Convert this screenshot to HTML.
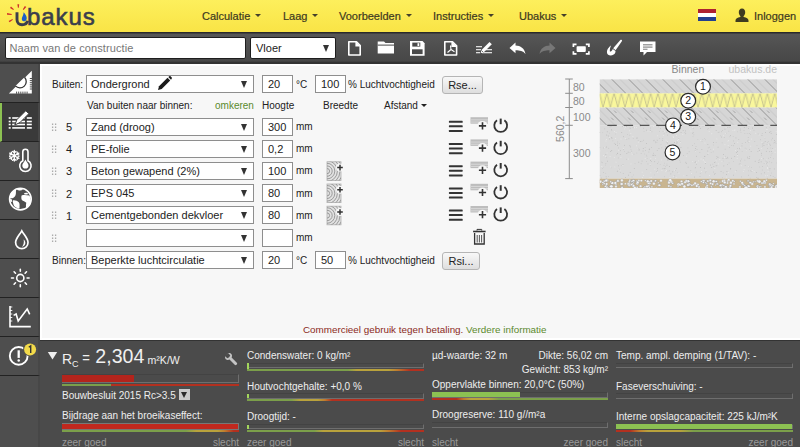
<!DOCTYPE html>
<html><head><meta charset="utf-8">
<style>
*{box-sizing:border-box;margin:0;padding:0}
html,body{width:800px;height:447px;overflow:hidden;font-family:"Liberation Sans",sans-serif;background:#f7f7f7;position:relative}
.a{position:absolute}
#hdr{left:0;top:0;width:800px;height:32px;background:linear-gradient(#fdef5c,#f9e446)}
#tb{left:0;top:32px;width:800px;height:32px;background:linear-gradient(#2a2a2a 0,#2a2a2a 1px,#565656 2px,#4e4e4e 16px,#474747 29px,#333 30.5px,#333 32px)}
#side{left:0;top:64px;width:40px;height:383px;background:#4e4e4e;border-right:2px solid #474747}
.sec{position:absolute;left:0;width:40px;height:39.1px;border-bottom:1.5px solid #222;border-right:2px solid #474747}
#main{left:40px;top:64px;width:760px;height:276px;background:#f7f7f7;border-left:2px solid #fff;border-top:2px solid #fff;border-bottom:2px solid #fff}
#bot{left:40px;top:340px;width:760px;height:107px;background:#4b4b4b;border-top:1px solid #333}
.nav{top:9.5px;font-size:11px;color:#3d3920;line-height:12px;-webkit-text-stroke:0.2px #3d3920}
.car{display:inline-block;width:0;height:0;border-left:3px solid transparent;border-right:3px solid transparent;border-top:3px solid #45402a;vertical-align:middle;margin-left:5px;margin-top:-2px}
.tin{background:#fff;border:1.5px solid #1e1e1e;border-radius:2px}
.sel{position:absolute;background:#fff;border:1px solid #8e8e8e;font-size:11px;color:#222;padding-left:4px;line-height:16px;height:18px;white-space:nowrap}
.num{position:absolute;background:#fff;border:1px solid #8e8e8e;font-size:11px;color:#222;padding-left:5px;line-height:16px;height:18px;width:31px}
.lbl{position:absolute;font-size:10px;color:#222;line-height:12px;white-space:nowrap}
.arr{position:absolute;right:6px;top:5px;width:0;height:0;border-left:3.5px solid transparent;border-right:3.5px solid transparent;border-top:7px solid #333}
.dots{position:absolute;width:5.5px;height:9px;background-image:radial-gradient(circle at 1px 1px,#b8b8b8 0.9px,transparent 1.1px);background-size:3.5px 2.6px}
.wt{position:absolute;font-size:10px;color:#eee;line-height:12px;white-space:nowrap}
.gt{position:absolute;font-size:10px;color:#999;line-height:12px;white-space:nowrap}
.bar{position:absolute;height:5.5px;background:#4b4b4b;border-top:1px solid #434343;border-right:1px solid #6e6e6e;border-bottom:1px solid #6e6e6e}
.strip{position:absolute;height:2px}
.btn{background:linear-gradient(#f8f8f8,#dedede);border:1px solid #b5b5b5;border-radius:3px;font-size:11px;color:#222;text-align:center;line-height:16px}
</style></head><body>
<div id="hdr" class="a"></div>
<!-- logo -->
<svg class="a" style="left:0;top:0" width="40" height="32" viewBox="0 0 40 32">
<g fill="#cf2f2a">
<path d="M17.4 4.3L19.2 4.3L18.8 7.8L17.9 7.8Z"/>
<path d="M10 7.9L11 6.6L13.9 9.3L13.3 10.1Z"/>
<path d="M26.3 7L24.9 6L22.8 9.3L23.6 9.9Z"/>
<path d="M7 13.1L7.1 14.8L11.7 14.9L11.7 14Z"/>
<path d="M8.6 20.9L9.6 22.2L12.9 19.7L12.4 18.9Z"/>
</g>
<path d="M17 12.2V19.5C17 23 19.3 24.8 22 24.8C24.7 24.8 27 23.6 27.5 20.8" fill="none" stroke="#3b3e4c" stroke-width="2.9"/>
<path d="M23.6 12.3C25.5 14.3 27 16.5 26.7 18.8C26.4 21 24.3 21.8 22.9 21.1C21.7 20.4 21.5 18.5 22.4 16.7C23 15.5 23.6 14 23.6 12.3Z" fill="#1d5ec8"/>
</svg>
<div class="a" style="left:27px;top:4.7px;font-size:24px;color:#3b3e4c;line-height:24px;letter-spacing:0.9px;-webkit-text-stroke:0.6px #3b3e4c">bakus</div>
<div class="a nav" style="left:202px">Calculatie<span class="car"></span></div>
<div class="a nav" style="left:283px">Laag<span class="car"></span></div>
<div class="a nav" style="left:339px">Voorbeelden<span class="car"></span></div>
<div class="a nav" style="left:433px">Instructies<span class="car"></span></div>
<div class="a nav" style="left:519px">Ubakus<span class="car"></span></div>
<div class="a" style="left:698px;top:9px;width:18px;height:12px;background:linear-gradient(#ae2230 0,#ae2230 4px,#fff 4px,#fff 8px,#23408f 8px)"></div>
<svg class="a" style="left:735px;top:8px" width="14" height="14" viewBox="0 0 14 14"><path d="M7 0.5C4.8 0.5 3.8 2.3 3.8 4.3C3.8 6 4.6 7.5 5.5 8.2L5.3 9C2.5 9.6 0.5 10.8 0.5 12.5V14H13.5V12.5C13.5 10.8 11.5 9.6 8.7 9L8.5 8.2C9.4 7.5 10.2 6 10.2 4.3C10.2 2.3 9.2 0.5 7 0.5Z" fill="#3f3b20"/></svg>
<div class="a nav" style="left:754px">Inloggen</div>

<div id="tb" class="a"></div>
<div class="a tin" style="left:5px;top:37px;width:241px;height:22px;font-size:11px;color:#777;padding:4px 0 0 3.5px;line-height:13px;letter-spacing:0.1px">Naam van de constructie</div>
<div class="a tin" style="left:250px;top:37px;width:86px;height:22px;font-size:11px;color:#222;padding:4px 0 0 5px;line-height:13px">Vloer<span class="arr" style="top:7px;right:6px"></span></div>
<svg class="a" style="left:0;top:32px" width="800" height="32" viewBox="0 32 800 32">
<!-- file -->
<path d="M348.8 41.8H356.5L360.2 45.5V55H348.8Z" fill="none" stroke="#fff" stroke-width="1.6" stroke-linejoin="round"/>
<path d="M356 41.8V46H360.2" fill="#fff" stroke="#fff" stroke-width="1.2"/>
<!-- folder -->
<path d="M377.7 41.5H384L385.5 43H394V53.6H377.7Z" fill="#fff"/>
<rect x="377.7" y="44.6" width="16.4" height="1" fill="#4a4a4a"/>
<!-- save -->
<path d="M410 41H422.5L424.6 43.2V55.8H410Z" fill="#fff"/>
<rect x="412.3" y="42.6" width="8" height="4" fill="#4a4a4a"/>
<rect x="417.5" y="43.2" width="1.8" height="2.8" fill="#fff"/>
<rect x="412" y="49.3" width="10.6" height="4.8" fill="#4a4a4a"/>
<!-- pdf -->
<path d="M444.8 41.8H452.5L456.6 45.8V55H444.8Z" fill="none" stroke="#fff" stroke-width="1.6" stroke-linejoin="round"/>
<path d="M452 41.8V46.3H456.6" fill="#fff" stroke="#fff" stroke-width="1.2"/>
<path d="M450.5 45.5L451 49.5L447.5 52.5M451 49.5L454.5 51.8" fill="none" stroke="#fff" stroke-width="1.1"/>
<!-- edit list -->
<g fill="#ddd">
<rect x="476" y="46" width="6" height="1.3"/><rect x="476" y="49" width="5" height="1.3"/><rect x="476" y="52" width="4" height="1.3"/>
<rect x="484.5" y="49" width="7.5" height="1.3"/><rect x="482" y="52" width="10" height="1.3"/>
</g>
<path d="M481.5 50L489.5 42L491.8 44.3L483.8 52.3L480.6 53.2Z" fill="#fff"/>
<path d="M481.5 50.5L483.3 52.3" stroke="#4a4a4a" stroke-width="0.8"/>
<!-- undo -->
<path d="M509.5 48L515.5 42.6V45.6C520.5 45.6 524.5 48.5 525.5 54C523 51 520 50.3 515.5 50.3V53.3Z" fill="#fff"/>
<!-- redo -->
<path d="M555.5 48L549.5 42.6V45.6C544.5 45.6 540.5 48.5 539.5 54C542 51 545 50.3 549.5 50.3V53.3Z" fill="#777"/>
<!-- fullscreen -->
<g fill="none" stroke="#fff" stroke-width="1.7">
<path d="M573.4 47V44.3H576.5"/><path d="M585.8 44.3H588.9V47"/><path d="M573.4 51.2V53.9H576.5"/><path d="M585.8 53.9H588.9V51.2"/>
</g>
<rect x="576.6" y="46.3" width="9.2" height="5.6" rx="0.8" fill="#fff"/>
<!-- brush -->
<path d="M620.6 39.8C621.3 39.3 622.4 40.2 622 41L615.6 50.2L613.2 48.3Z" fill="#fff"/>
<path d="M611.2 45.6C608.8 47 606.6 50 607 52.8C607.4 55.6 611 56.2 613.6 54.6C615 53.6 615.6 52.2 615.5 50.9L612.8 48.9C612.3 50.3 611.4 51.4 609.9 51.6C609.6 49.6 610.2 47.3 611.2 45.6Z" fill="#fff"/>
<!-- comment -->
<path d="M640 41.5H655.5V52H647L643.5 55.5V52H640Z" fill="#fff"/>
<rect x="643" y="44.2" width="9.5" height="1.2" fill="#888"/><rect x="643" y="46.5" width="9.5" height="1.2" fill="#888"/><rect x="643" y="48.7" width="4.5" height="1.1" fill="#888"/>
</svg>
<div id="side" class="a"></div>
<div class="sec" style="top:63.5px"></div>
<div class="sec" style="top:102.6px;background:#3a3a3a;border-left:2px solid #8cc152"></div>
<div class="sec" style="top:141.7px"></div>
<div class="sec" style="top:180.8px"></div>
<div class="sec" style="top:219.9px"></div>
<div class="sec" style="top:259.0px"></div>
<div class="sec" style="top:298.1px"></div>
<div class="sec" style="top:337.2px"></div>
<svg class="a" style="left:0;top:64px" width="40" height="383" viewBox="0 64 40 383">
<!-- set square -->
<path d="M31.8 70.7V93.6H8.9Z" fill="#fff"/>
<path d="M15.4 85.9A6.1 6.1 0 0 0 24.5 77.2" fill="#fff" stroke="#333" stroke-width="1.3"/>
<g stroke="#4e4e4e" stroke-width="1">
<path d="M16.6 93.8V91.6M18.7 93.8V91.6M20.8 93.8V91.6M22.9 93.8V91.6M25 93.8V91.6M27.1 93.8V91.6"/>
<path d="M32 78.5H29.8M32 80.6H29.8M32 82.7H29.8M32 84.8H29.8M32 86.9H29.8M32 89H29.8"/>
</g>
<!-- edit list -->
<g fill="#fff">
<rect x="8.7" y="117.2" width="2" height="1.6"/><rect x="8.7" y="120.7" width="2" height="1.6"/><rect x="8.7" y="123.7" width="2" height="1.6"/><rect x="8.7" y="127.1" width="2" height="1.6"/>
<rect x="12.2" y="117.2" width="12.8" height="1.6"/><rect x="12.2" y="120.7" width="12.8" height="1.6"/><rect x="12.2" y="123.7" width="12.8" height="1.6"/><rect x="12.2" y="127.1" width="12.8" height="1.6"/>
<rect x="26.8" y="117.2" width="5" height="1.6"/><rect x="26.8" y="120.7" width="5" height="1.6"/><rect x="26.8" y="123.7" width="5" height="1.6"/><rect x="26.8" y="127.1" width="5" height="1.6"/>
</g>
<path d="M14.8 125L17 119.5L25.8 110.7L28.8 113.7L20 122.5Z" fill="#fff" stroke="#3a3a3a" stroke-width="1"/>
<!-- snowflake -->
<path d="M14.30 155.80L14.30 150.50M14.30 152.80L15.99 151.39M14.30 152.80L12.61 151.39M14.30 155.80L9.71 153.15M11.70 154.30L11.32 152.13M11.70 154.30L9.63 155.05M14.30 155.80L9.71 158.45M11.70 157.30L9.63 156.55M11.70 157.30L11.32 159.47M14.30 155.80L14.30 161.10M14.30 158.80L12.61 160.21M14.30 158.80L15.99 160.21M14.30 155.80L18.89 158.45M16.90 157.30L17.28 159.47M16.90 157.30L18.97 156.55M14.30 155.80L18.89 153.15M16.90 154.30L18.97 155.05M16.90 154.30L17.28 152.13" stroke="#fff" stroke-width="1.3" stroke-linecap="round" fill="none"/>
<circle cx="14.3" cy="155.8" r="1.6" fill="#fff"/>
<!-- thermometer -->
<path d="M22.8 160.8V151.8A2.6 2.6 0 0 1 28 151.8V160.8A5.7 5.7 0 1 1 22.8 160.8Z" fill="none" stroke="#fff" stroke-width="1.6"/>
<path d="M25.4 159.5C26.5 162 28.5 163.5 28.5 165.5A3.1 3.1 0 0 1 22.3 165.5C22.3 163.5 24.3 162 25.4 159.5Z" fill="#fff"/>
<!-- globe -->
<circle cx="20.4" cy="199.1" r="10.8" fill="none" stroke="#fff" stroke-width="1.6"/>
<g fill="#fff">
<path d="M10.5 193.5C12 191.3 14 190 16.2 189.6C15.6 191.5 16.3 193.2 15.6 195C15 196.8 13.8 197.8 12.5 198.2C11.3 198.2 10 198.5 9.6 198C9.7 196.4 9.9 194.8 10.5 193.5Z"/>
<path d="M9.7 199.5C10.2 199 11 198.8 11.6 199.3C12.2 200 12 201.2 11.6 202.3C11 202 10.2 201 9.7 199.5Z"/>
<path d="M13 200.3C15 200 17.6 200.8 18.8 202.2C20 203.6 19.5 205.8 19.5 208.3C18 208.6 16 208 14.6 206.6C13.4 205 13.2 203.4 12.8 202C12.6 201.3 12.7 200.7 13 200.3Z"/>
<path d="M21.6 195.5C23.5 194.6 26.8 195 29.3 195.6C30.6 197.5 31.2 200.5 30.9 203.2C30 205.6 28.2 207.3 26.2 208.3C25.8 206.2 25.9 204.5 26.3 202.8C25 201.5 23 201 21.9 200C21.2 198.6 21.2 196.8 21.6 195.5Z"/>
<path d="M23.8 193.7C24.6 192.8 26.5 192.6 27.8 193.2C28.3 193.8 27.5 194.5 26.5 194.6C25.5 194.6 24.4 194.4 23.8 193.7Z"/>
<path d="M16.5 189.4C18.5 189 21 189 23 189.6C22 190.3 20.5 190.6 19 190.4C18 190.2 17 189.9 16.5 189.4Z"/>
</g>
<!-- drop -->
<path d="M21.8 230.8C19.5 235 15.6 238.5 15.6 242.4A6.2 6.2 0 0 0 28 242.4C28 238.5 24.1 235 21.8 230.8Z" fill="none" stroke="#fff" stroke-width="1.7"/>
<path d="M23.6 239.6C26.2 241.6 26.2 246 22 246.9C23.6 245 24.3 242.5 23.6 239.6Z" fill="#fff"/>
<!-- sun -->
<circle cx="20.3" cy="278" r="3.6" fill="none" stroke="#fff" stroke-width="1.6"/>
<g stroke="#fff" stroke-width="1.6" stroke-linecap="round">
<path d="M20.3 269.2V271.2M20.3 284.8V286.8M11.5 278H13.5M27.1 278H29.1M14.1 271.8L15.5 273.2M25.1 282.8L26.5 284.2M14.1 284.2L15.5 282.8M25.1 273.2L26.5 271.8"/>
</g>
<!-- chart -->
<g fill="none" stroke="#fff" stroke-width="1.6">
<path d="M10 306V326.6H30.8"/>
<path d="M13.6 315.4L16.1 314L18.2 321.1L27.2 309L29.7 314.3" stroke-linejoin="miter"/>
</g>
<g stroke="#fff" stroke-width="0.9"><path d="M10 307H12.3M10 310.5H12.3M10 314H12.3M10 317.5H12.3M10 321H12.3"/></g>
<!-- alert -->
<circle cx="18.7" cy="355.9" r="8.9" fill="none" stroke="#fff" stroke-width="1.9"/>
<path d="M18.7 350.3V357.9" stroke="#fff" stroke-width="2.3"/>
<circle cx="18.7" cy="360.6" r="1.25" fill="#fff"/>
<circle cx="30.1" cy="349.4" r="7" fill="#4e4e4e"/>
<circle cx="30.1" cy="349.4" r="6" fill="#f2da4a"/>
<path d="M28.8 347.3L30.7 345.9V353" fill="none" stroke="#333" stroke-width="1.4"/>
</svg>
<div id="main" class="a"></div>
<div class="lbl" style="left:52px;top:79px">Buiten:</div>
<div class="sel" style="left:86px;top:75px;width:168px">Ondergrond<span class="arr"></span></div>
<svg class="a" style="left:157px;top:76px" width="16" height="15" viewBox="0 0 16 15"><path d="M1 14L2 10.3L10.5 1.8L13.2 4.5L4.7 13Z" fill="#1a1a1a"/><path d="M11.3 1L12.3 0.3C12.8 0 13.3 0 13.7 0.4L14.6 1.3C15 1.7 15 2.2 14.7 2.7L14 3.7Z" fill="#1a1a1a"/></svg>
<div class="num" style="left:262px;top:75px">20</div>
<div class="lbl" style="left:296px;top:79px">°C</div>
<div class="num" style="left:315px;top:75px">100</div>
<div class="lbl" style="left:348px;top:79px">% Luchtvochtigheid</div>
<div class="a btn" style="left:442px;top:76px;width:41px;height:18px">Rse...</div>

<div class="lbl" style="left:87px;top:100px">Van buiten naar binnen:</div>
<div class="lbl" style="left:215px;top:100px;color:#5b8a2d">omkeren</div>
<div class="lbl" style="left:262px;top:100px">Hoogte</div>
<div class="lbl" style="left:323px;top:100px">Breedte</div>
<div class="lbl" style="left:384px;top:100px">Afstand<span class="car" style="border-top-color:#222;margin-left:3px"></span></div>

<!-- rows -->
<svg class="a" style="left:51px;top:122.5px" width="7" height="10" viewBox="0 0 7 10"><g fill="#a0a0a0"><rect x="0.95" y="0.55" width="1.3" height="1.3"/><rect x="3.95" y="0.55" width="1.3" height="1.3"/><rect x="0.95" y="3.55" width="1.3" height="1.3"/><rect x="3.95" y="3.55" width="1.3" height="1.3"/><rect x="0.95" y="6.55" width="1.3" height="1.3"/><rect x="3.95" y="6.55" width="1.3" height="1.3"/></g></svg>
<div class="lbl" style="left:66px;top:121.0px;font-size:11px">5</div>
<div class="sel" style="left:86px;top:117.5px;width:168px">Zand (droog)<span class="arr"></span></div>
<div class="num" style="left:262px;top:117.5px">300</div><div class="lbl" style="left:296px;top:121.0px">mm</div>
<svg class="a" style="left:51px;top:144.7px" width="7" height="10" viewBox="0 0 7 10"><g fill="#a0a0a0"><rect x="0.95" y="0.55" width="1.3" height="1.3"/><rect x="3.95" y="0.55" width="1.3" height="1.3"/><rect x="0.95" y="3.55" width="1.3" height="1.3"/><rect x="3.95" y="3.55" width="1.3" height="1.3"/><rect x="0.95" y="6.55" width="1.3" height="1.3"/><rect x="3.95" y="6.55" width="1.3" height="1.3"/></g></svg>
<div class="lbl" style="left:66px;top:143.2px;font-size:11px">4</div>
<div class="sel" style="left:86px;top:139.7px;width:168px">PE-folie<span class="arr"></span></div>
<div class="num" style="left:262px;top:139.7px">0,2</div><div class="lbl" style="left:296px;top:143.2px">mm</div>
<svg class="a" style="left:51px;top:166.9px" width="7" height="10" viewBox="0 0 7 10"><g fill="#a0a0a0"><rect x="0.95" y="0.55" width="1.3" height="1.3"/><rect x="3.95" y="0.55" width="1.3" height="1.3"/><rect x="0.95" y="3.55" width="1.3" height="1.3"/><rect x="3.95" y="3.55" width="1.3" height="1.3"/><rect x="0.95" y="6.55" width="1.3" height="1.3"/><rect x="3.95" y="6.55" width="1.3" height="1.3"/></g></svg>
<div class="lbl" style="left:66px;top:165.4px;font-size:11px">3</div>
<div class="sel" style="left:86px;top:161.9px;width:168px">Beton gewapend (2%)<span class="arr"></span></div>
<div class="num" style="left:262px;top:161.9px">100</div><div class="lbl" style="left:296px;top:165.4px">mm</div>
<svg class="a" style="left:51px;top:189.1px" width="7" height="10" viewBox="0 0 7 10"><g fill="#a0a0a0"><rect x="0.95" y="0.55" width="1.3" height="1.3"/><rect x="3.95" y="0.55" width="1.3" height="1.3"/><rect x="0.95" y="3.55" width="1.3" height="1.3"/><rect x="3.95" y="3.55" width="1.3" height="1.3"/><rect x="0.95" y="6.55" width="1.3" height="1.3"/><rect x="3.95" y="6.55" width="1.3" height="1.3"/></g></svg>
<div class="lbl" style="left:66px;top:187.6px;font-size:11px">2</div>
<div class="sel" style="left:86px;top:184.1px;width:168px">EPS 045<span class="arr"></span></div>
<div class="num" style="left:262px;top:184.1px">80</div><div class="lbl" style="left:296px;top:187.6px">mm</div>
<svg class="a" style="left:51px;top:211.3px" width="7" height="10" viewBox="0 0 7 10"><g fill="#a0a0a0"><rect x="0.95" y="0.55" width="1.3" height="1.3"/><rect x="3.95" y="0.55" width="1.3" height="1.3"/><rect x="0.95" y="3.55" width="1.3" height="1.3"/><rect x="3.95" y="3.55" width="1.3" height="1.3"/><rect x="0.95" y="6.55" width="1.3" height="1.3"/><rect x="3.95" y="6.55" width="1.3" height="1.3"/></g></svg>
<div class="lbl" style="left:66px;top:209.8px;font-size:11px">1</div>
<div class="sel" style="left:86px;top:206.3px;width:168px">Cementgebonden dekvloer<span class="arr"></span></div>
<div class="num" style="left:262px;top:206.3px">80</div><div class="lbl" style="left:296px;top:209.8px">mm</div>
<svg class="a" style="left:51px;top:233.5px" width="7" height="10" viewBox="0 0 7 10"><g fill="#a0a0a0"><rect x="0.95" y="0.55" width="1.3" height="1.3"/><rect x="3.95" y="0.55" width="1.3" height="1.3"/><rect x="0.95" y="3.55" width="1.3" height="1.3"/><rect x="3.95" y="3.55" width="1.3" height="1.3"/><rect x="0.95" y="6.55" width="1.3" height="1.3"/><rect x="3.95" y="6.55" width="1.3" height="1.3"/></g></svg>
<div class="sel" style="left:86px;top:228.5px;width:168px"><span class="arr"></span></div>
<div class="num" style="left:262px;top:228.5px"></div><div class="lbl" style="left:296px;top:232.0px">mm</div>
<div class="lbl" style="left:52px;top:254.7px">Binnen:</div>
<div class="sel" style="left:86px;top:250.7px;width:168px">Beperkte luchtcirculatie<span class="arr"></span></div>
<div class="num" style="left:262px;top:250.7px">20</div><div class="lbl" style="left:296px;top:254.7px">°C</div>
<div class="num" style="left:315px;top:250.7px">50</div>
<div class="lbl" style="left:348px;top:254.7px">% Luchtvochtigheid</div>
<div class="a btn" style="left:442px;top:252.2px;width:38px;height:18px">Rsi...</div>
<svg class="a" style="left:0;top:0" width="800" height="340" viewBox="0 0 800 340">
<rect x="448.9" y="120.8" width="13.8" height="2" rx="0.6" fill="#333"/>
<rect x="448.9" y="125.3" width="13.8" height="2" rx="0.6" fill="#333"/>
<rect x="448.9" y="130.0" width="13.8" height="2" rx="0.6" fill="#333"/>
<rect x="470.5" y="117.2" width="17.5" height="6.5" fill="#bdbdbd"/>
<rect x="470.5" y="119.3" width="17.5" height="1.1" fill="#d6d6d6"/>
<rect x="470.5" y="121.5" width="17.5" height="1.1" fill="#d6d6d6"/>
<circle cx="482.5" cy="125.9" r="5" fill="#f7f7f7"/>
<path d="M478.9 125.9H486.1M482.5 122.3V129.5" stroke="#333" stroke-width="1.6"/>
<path d="M497 120.3A6.4 6.4 0 1 0 504.4 120.3" fill="none" stroke="#333" stroke-width="1.8"/>
<path d="M500.7 118.6V124.2" stroke="#333" stroke-width="2"/>
<rect x="448.9" y="143.0" width="13.8" height="2" rx="0.6" fill="#333"/>
<rect x="448.9" y="147.5" width="13.8" height="2" rx="0.6" fill="#333"/>
<rect x="448.9" y="152.2" width="13.8" height="2" rx="0.6" fill="#333"/>
<rect x="470.5" y="139.4" width="17.5" height="6.5" fill="#bdbdbd"/>
<rect x="470.5" y="141.5" width="17.5" height="1.1" fill="#d6d6d6"/>
<rect x="470.5" y="143.7" width="17.5" height="1.1" fill="#d6d6d6"/>
<circle cx="482.5" cy="148.1" r="5" fill="#f7f7f7"/>
<path d="M478.9 148.1H486.1M482.5 144.5V151.7" stroke="#333" stroke-width="1.6"/>
<path d="M497 142.5A6.4 6.4 0 1 0 504.4 142.5" fill="none" stroke="#333" stroke-width="1.8"/>
<path d="M500.7 140.8V146.4" stroke="#333" stroke-width="2"/>
<rect x="448.9" y="165.2" width="13.8" height="2" rx="0.6" fill="#333"/>
<rect x="448.9" y="169.7" width="13.8" height="2" rx="0.6" fill="#333"/>
<rect x="448.9" y="174.4" width="13.8" height="2" rx="0.6" fill="#333"/>
<rect x="470.5" y="161.6" width="17.5" height="6.5" fill="#bdbdbd"/>
<rect x="470.5" y="163.7" width="17.5" height="1.1" fill="#d6d6d6"/>
<rect x="470.5" y="165.9" width="17.5" height="1.1" fill="#d6d6d6"/>
<circle cx="482.5" cy="170.3" r="5" fill="#f7f7f7"/>
<path d="M478.9 170.3H486.1M482.5 166.7V173.9" stroke="#333" stroke-width="1.6"/>
<path d="M497 164.7A6.4 6.4 0 1 0 504.4 164.7" fill="none" stroke="#333" stroke-width="1.8"/>
<path d="M500.7 163.0V168.6" stroke="#333" stroke-width="2"/>
<rect x="448.9" y="187.4" width="13.8" height="2" rx="0.6" fill="#333"/>
<rect x="448.9" y="191.9" width="13.8" height="2" rx="0.6" fill="#333"/>
<rect x="448.9" y="196.6" width="13.8" height="2" rx="0.6" fill="#333"/>
<rect x="470.5" y="183.8" width="17.5" height="6.5" fill="#bdbdbd"/>
<rect x="470.5" y="185.9" width="17.5" height="1.1" fill="#d6d6d6"/>
<rect x="470.5" y="188.1" width="17.5" height="1.1" fill="#d6d6d6"/>
<circle cx="482.5" cy="192.5" r="5" fill="#f7f7f7"/>
<path d="M478.9 192.5H486.1M482.5 188.9V196.1" stroke="#333" stroke-width="1.6"/>
<path d="M497 186.9A6.4 6.4 0 1 0 504.4 186.9" fill="none" stroke="#333" stroke-width="1.8"/>
<path d="M500.7 185.2V190.8" stroke="#333" stroke-width="2"/>
<rect x="448.9" y="209.6" width="13.8" height="2" rx="0.6" fill="#333"/>
<rect x="448.9" y="214.1" width="13.8" height="2" rx="0.6" fill="#333"/>
<rect x="448.9" y="218.8" width="13.8" height="2" rx="0.6" fill="#333"/>
<rect x="470.5" y="206.0" width="17.5" height="6.5" fill="#bdbdbd"/>
<rect x="470.5" y="208.1" width="17.5" height="1.1" fill="#d6d6d6"/>
<rect x="470.5" y="210.3" width="17.5" height="1.1" fill="#d6d6d6"/>
<circle cx="482.5" cy="214.7" r="5" fill="#f7f7f7"/>
<path d="M478.9 214.7H486.1M482.5 211.1V218.3" stroke="#333" stroke-width="1.6"/>
<path d="M497 209.1A6.4 6.4 0 1 0 504.4 209.1" fill="none" stroke="#333" stroke-width="1.8"/>
<path d="M500.7 207.4V213.0" stroke="#333" stroke-width="2"/>
<g transform="translate(327,161.8)">
<clipPath id="c2"><rect x="0" y="0" width="14" height="18.6"/></clipPath>
<rect x="0" y="0" width="14" height="18.6" fill="#e2e2e2" stroke="#b0b0b0" stroke-width="0.8"/>
<g clip-path="url(#c2)" fill="none" stroke="#8e8e8e" stroke-width="0.85">
<circle cx="0" cy="9.3" r="2.6"/>
<circle cx="0" cy="9.3" r="5.2"/>
<circle cx="0" cy="9.3" r="7.8"/>
<circle cx="0" cy="9.3" r="10.4"/>
<circle cx="0" cy="9.3" r="13"/>
<circle cx="0" cy="9.3" r="15.6"/>
</g>
<circle cx="13" cy="5.8" r="4" fill="#f7f7f7"/>
<path d="M10.2 5.8H15.8M13 3V8.6" stroke="#333" stroke-width="1.5"/>
</g>
<g transform="translate(327,184.0)">
<clipPath id="c3"><rect x="0" y="0" width="14" height="18.6"/></clipPath>
<rect x="0" y="0" width="14" height="18.6" fill="#e2e2e2" stroke="#b0b0b0" stroke-width="0.8"/>
<g clip-path="url(#c3)" fill="none" stroke="#8e8e8e" stroke-width="0.85">
<circle cx="0" cy="9.3" r="2.6"/>
<circle cx="0" cy="9.3" r="5.2"/>
<circle cx="0" cy="9.3" r="7.8"/>
<circle cx="0" cy="9.3" r="10.4"/>
<circle cx="0" cy="9.3" r="13"/>
<circle cx="0" cy="9.3" r="15.6"/>
</g>
<circle cx="13" cy="5.8" r="4" fill="#f7f7f7"/>
<path d="M10.2 5.8H15.8M13 3V8.6" stroke="#333" stroke-width="1.5"/>
</g>
<g transform="translate(327,206.2)">
<clipPath id="c4"><rect x="0" y="0" width="14" height="18.6"/></clipPath>
<rect x="0" y="0" width="14" height="18.6" fill="#e2e2e2" stroke="#b0b0b0" stroke-width="0.8"/>
<g clip-path="url(#c4)" fill="none" stroke="#8e8e8e" stroke-width="0.85">
<circle cx="0" cy="9.3" r="2.6"/>
<circle cx="0" cy="9.3" r="5.2"/>
<circle cx="0" cy="9.3" r="7.8"/>
<circle cx="0" cy="9.3" r="10.4"/>
<circle cx="0" cy="9.3" r="13"/>
<circle cx="0" cy="9.3" r="15.6"/>
</g>
<circle cx="13" cy="5.8" r="4" fill="#f7f7f7"/>
<path d="M10.2 5.8H15.8M13 3V8.6" stroke="#333" stroke-width="1.5"/>
</g>
<path d="M473.1 231.5H485.6" stroke="#333" stroke-width="1.6"/>
<path d="M477 230.5V229.4H481.7V230.5" fill="none" stroke="#333" stroke-width="1"/>
<path d="M474.6 233.1V244.0H484.2V233.1" fill="none" stroke="#333" stroke-width="1.3"/>
<path d="M477.2 235.0V242.5M479.4 235.0V242.5M481.6 235.0V242.5" stroke="#444" stroke-width="0.9"/>
</svg>
<div class="a" style="left:303px;top:323.5px;font-size:9.85px;color:#8b2a22;line-height:12px;white-space:nowrap">Commercieel gebruik tegen betaling. <span style="color:#5b8a2d">Verdere informatie</span></div>
<svg class="a" style="left:540px;top:60px" width="250" height="135" viewBox="540 60 250 135">
<defs>
<pattern id="h1" patternUnits="userSpaceOnUse" width="17" height="17" x="600" y="79" patternTransform="skewX(45)">
<rect x="0" y="0" width="0.9" height="17" fill="#8c8c8c"/><rect x="8.5" y="0" width="0.7" height="17" fill="#c0c0c0"/>
</pattern>
<pattern id="zz" patternUnits="userSpaceOnUse" width="7.3" height="14.2" x="599.5" y="93.3">
<path d="M0 0L3.65 14.2L7.3 0" fill="none" stroke="#bdb98c" stroke-width="0.8"/><path d="M1.2 0L3.65 10L6.1 0" fill="none" stroke="#e6e39a" stroke-width="0.6"/>
</pattern>
<pattern id="h3" patternUnits="userSpaceOnUse" width="17" height="17.8" x="600" y="107.6" patternTransform="skewX(45)">
<rect x="0" y="0" width="0.9" height="17.8" fill="#8c8c8c"/><rect x="8.5" y="0" width="0.7" height="17.8" fill="#c0c0c0"/><rect x="5" y="3" width="0.8" height="2.5" fill="#9a9a9a"/><rect x="12" y="10" width="0.8" height="2.5" fill="#9a9a9a"/>
</pattern>
<clipPath id="dclip"><rect x="599.5" y="79.2" width="177.5" height="108.8"/></clipPath>
</defs>
<g clip-path="url(#dclip)">
<rect x="599.5" y="79.2" width="177.5" height="14.2" fill="#d6d6d6"/>
<rect x="599.5" y="79.2" width="177.5" height="14.2" fill="url(#h1)"/>
<rect x="599.5" y="93.4" width="177.5" height="14.2" fill="#f9f79c"/>
<rect x="599.5" y="93.4" width="177.5" height="14.2" fill="url(#zz)"/>
<rect x="599.5" y="107.6" width="177.5" height="17.8" fill="#d6d6d6"/>
<rect x="599.5" y="107.6" width="177.5" height="17.8" fill="url(#h3)"/>
<rect x="599.5" y="125.4" width="177.5" height="53" fill="#dadada"/>
<rect x="710.1" y="164.7" width="0.7" height="0.7" fill="#b0b0b0"/>
<rect x="748.7" y="166.5" width="0.7" height="0.7" fill="#bcbcbc"/>
<rect x="714.7" y="173.1" width="0.7" height="0.7" fill="#b0b0b0"/>
<rect x="665.5" y="171.4" width="0.7" height="0.7" fill="#f0f0f0"/>
<rect x="696.0" y="155.9" width="0.7" height="0.7" fill="#b0b0b0"/>
<rect x="729.3" y="147.2" width="0.7" height="0.7" fill="#bcbcbc"/>
<rect x="762.2" y="166.0" width="0.7" height="0.7" fill="#bcbcbc"/>
<rect x="734.7" y="129.6" width="0.7" height="0.7" fill="#f0f0f0"/>
<rect x="622.0" y="125.9" width="0.7" height="0.7" fill="#b0b0b0"/>
<rect x="636.7" y="137.1" width="0.7" height="0.7" fill="#bcbcbc"/>
<rect x="754.4" y="141.0" width="0.7" height="0.7" fill="#bcbcbc"/>
<rect x="695.2" y="161.4" width="0.7" height="0.7" fill="#bcbcbc"/>
<rect x="631.7" y="176.6" width="0.7" height="0.7" fill="#bcbcbc"/>
<rect x="771.1" y="172.7" width="0.7" height="0.7" fill="#c4c4c4"/>
<rect x="603.3" y="147.6" width="0.7" height="0.7" fill="#bcbcbc"/>
<rect x="646.3" y="143.2" width="0.7" height="0.7" fill="#b0b0b0"/>
<rect x="705.3" y="163.0" width="0.7" height="0.7" fill="#b0b0b0"/>
<rect x="654.5" y="168.8" width="0.7" height="0.7" fill="#f0f0f0"/>
<rect x="723.1" y="135.5" width="0.7" height="0.7" fill="#f0f0f0"/>
<rect x="724.6" y="128.8" width="0.7" height="0.7" fill="#b0b0b0"/>
<rect x="768.0" y="144.6" width="0.7" height="0.7" fill="#f0f0f0"/>
<rect x="602.7" y="167.2" width="0.7" height="0.7" fill="#c4c4c4"/>
<rect x="666.3" y="170.0" width="0.7" height="0.7" fill="#f0f0f0"/>
<rect x="607.8" y="135.3" width="0.7" height="0.7" fill="#bcbcbc"/>
<rect x="620.6" y="138.7" width="0.7" height="0.7" fill="#f0f0f0"/>
<rect x="660.6" y="144.4" width="0.7" height="0.7" fill="#c4c4c4"/>
<rect x="737.2" y="131.5" width="0.7" height="0.7" fill="#c4c4c4"/>
<rect x="752.1" y="127.7" width="0.7" height="0.7" fill="#b0b0b0"/>
<rect x="636.5" y="152.7" width="0.7" height="0.7" fill="#c4c4c4"/>
<rect x="762.5" y="143.6" width="0.7" height="0.7" fill="#b0b0b0"/>
<rect x="655.0" y="142.4" width="0.7" height="0.7" fill="#bcbcbc"/>
<rect x="741.3" y="158.7" width="0.7" height="0.7" fill="#c4c4c4"/>
<rect x="776.4" y="134.3" width="0.7" height="0.7" fill="#b0b0b0"/>
<rect x="613.9" y="157.3" width="0.7" height="0.7" fill="#f0f0f0"/>
<rect x="605.1" y="164.7" width="0.7" height="0.7" fill="#c4c4c4"/>
<rect x="746.2" y="149.7" width="0.7" height="0.7" fill="#f0f0f0"/>
<rect x="625.3" y="177.2" width="0.7" height="0.7" fill="#b0b0b0"/>
<rect x="741.8" y="143.3" width="0.7" height="0.7" fill="#bcbcbc"/>
<rect x="622.7" y="164.2" width="0.7" height="0.7" fill="#bcbcbc"/>
<rect x="711.4" y="167.2" width="0.7" height="0.7" fill="#b0b0b0"/>
<rect x="629.5" y="145.4" width="0.7" height="0.7" fill="#b0b0b0"/>
<rect x="749.4" y="141.3" width="0.7" height="0.7" fill="#f0f0f0"/>
<rect x="763.2" y="158.4" width="0.7" height="0.7" fill="#bcbcbc"/>
<rect x="772.7" y="149.6" width="0.7" height="0.7" fill="#f0f0f0"/>
<rect x="721.8" y="142.5" width="0.7" height="0.7" fill="#c4c4c4"/>
<rect x="651.2" y="147.0" width="0.7" height="0.7" fill="#bcbcbc"/>
<rect x="619.5" y="169.0" width="0.7" height="0.7" fill="#bcbcbc"/>
<rect x="710.8" y="152.0" width="0.7" height="0.7" fill="#c4c4c4"/>
<rect x="631.5" y="151.6" width="0.7" height="0.7" fill="#c4c4c4"/>
<rect x="610.7" y="167.5" width="0.7" height="0.7" fill="#c4c4c4"/>
<rect x="722.8" y="160.7" width="0.7" height="0.7" fill="#c4c4c4"/>
<rect x="664.0" y="162.8" width="0.7" height="0.7" fill="#c4c4c4"/>
<rect x="747.8" y="139.7" width="0.7" height="0.7" fill="#c4c4c4"/>
<rect x="769.3" y="143.7" width="0.7" height="0.7" fill="#bcbcbc"/>
<rect x="702.6" y="126.4" width="0.7" height="0.7" fill="#c4c4c4"/>
<rect x="657.3" y="140.2" width="0.7" height="0.7" fill="#c4c4c4"/>
<rect x="744.5" y="159.8" width="0.7" height="0.7" fill="#c4c4c4"/>
<rect x="661.2" y="159.6" width="0.7" height="0.7" fill="#f0f0f0"/>
<rect x="661.6" y="170.1" width="0.7" height="0.7" fill="#f0f0f0"/>
<rect x="772.8" y="176.0" width="0.7" height="0.7" fill="#bcbcbc"/>
<rect x="693.5" y="134.5" width="0.7" height="0.7" fill="#c4c4c4"/>
<rect x="765.9" y="150.9" width="0.7" height="0.7" fill="#b0b0b0"/>
<rect x="727.2" y="164.1" width="0.7" height="0.7" fill="#bcbcbc"/>
<rect x="709.0" y="175.0" width="0.7" height="0.7" fill="#f0f0f0"/>
<rect x="653.2" y="154.8" width="0.7" height="0.7" fill="#c4c4c4"/>
<rect x="727.4" y="127.3" width="0.7" height="0.7" fill="#bcbcbc"/>
<rect x="703.6" y="158.6" width="0.7" height="0.7" fill="#bcbcbc"/>
<rect x="638.4" y="161.8" width="0.7" height="0.7" fill="#b0b0b0"/>
<rect x="774.6" y="177.2" width="0.7" height="0.7" fill="#bcbcbc"/>
<rect x="609.1" y="132.8" width="0.7" height="0.7" fill="#c4c4c4"/>
<rect x="771.3" y="151.1" width="0.7" height="0.7" fill="#b0b0b0"/>
<rect x="673.2" y="144.2" width="0.7" height="0.7" fill="#b0b0b0"/>
<rect x="704.3" y="138.3" width="0.7" height="0.7" fill="#c4c4c4"/>
<rect x="599.6" y="147.1" width="0.7" height="0.7" fill="#c4c4c4"/>
<rect x="751.4" y="171.3" width="0.7" height="0.7" fill="#c4c4c4"/>
<rect x="770.7" y="154.7" width="0.7" height="0.7" fill="#c4c4c4"/>
<rect x="616.3" y="154.4" width="0.7" height="0.7" fill="#c4c4c4"/>
<rect x="768.3" y="141.2" width="0.7" height="0.7" fill="#c4c4c4"/>
<rect x="744.8" y="147.8" width="0.7" height="0.7" fill="#c4c4c4"/>
<rect x="682.5" y="134.0" width="0.7" height="0.7" fill="#f0f0f0"/>
<rect x="699.6" y="176.1" width="0.7" height="0.7" fill="#bcbcbc"/>
<rect x="707.5" y="144.2" width="0.7" height="0.7" fill="#b0b0b0"/>
<rect x="667.3" y="142.9" width="0.7" height="0.7" fill="#bcbcbc"/>
<rect x="657.3" y="171.8" width="0.7" height="0.7" fill="#f0f0f0"/>
<rect x="675.7" y="177.1" width="0.7" height="0.7" fill="#f0f0f0"/>
<rect x="651.2" y="176.9" width="0.7" height="0.7" fill="#f0f0f0"/>
<rect x="667.6" y="170.7" width="0.7" height="0.7" fill="#bcbcbc"/>
<rect x="705.3" y="139.4" width="0.7" height="0.7" fill="#c4c4c4"/>
<rect x="687.6" y="147.6" width="0.7" height="0.7" fill="#c4c4c4"/>
<rect x="767.3" y="141.9" width="0.7" height="0.7" fill="#c4c4c4"/>
<rect x="624.9" y="127.0" width="0.7" height="0.7" fill="#f0f0f0"/>
<rect x="643.1" y="127.9" width="0.7" height="0.7" fill="#bcbcbc"/>
<rect x="746.3" y="126.5" width="0.7" height="0.7" fill="#c4c4c4"/>
<rect x="642.7" y="150.7" width="0.7" height="0.7" fill="#b0b0b0"/>
<rect x="643.1" y="139.9" width="0.7" height="0.7" fill="#bcbcbc"/>
<rect x="727.6" y="140.8" width="0.7" height="0.7" fill="#f0f0f0"/>
<rect x="707.4" y="150.7" width="0.7" height="0.7" fill="#b0b0b0"/>
<rect x="602.4" y="132.4" width="0.7" height="0.7" fill="#c4c4c4"/>
<rect x="694.2" y="143.4" width="0.7" height="0.7" fill="#c4c4c4"/>
<rect x="729.3" y="127.2" width="0.7" height="0.7" fill="#c4c4c4"/>
<rect x="663.6" y="164.9" width="0.7" height="0.7" fill="#bcbcbc"/>
<rect x="606.0" y="139.1" width="0.7" height="0.7" fill="#f0f0f0"/>
<rect x="721.2" y="131.4" width="0.7" height="0.7" fill="#bcbcbc"/>
<rect x="602.1" y="166.7" width="0.7" height="0.7" fill="#f0f0f0"/>
<rect x="705.1" y="162.0" width="0.7" height="0.7" fill="#f0f0f0"/>
<rect x="751.9" y="170.0" width="0.7" height="0.7" fill="#f0f0f0"/>
<rect x="669.1" y="170.5" width="0.7" height="0.7" fill="#bcbcbc"/>
<rect x="759.1" y="150.2" width="0.7" height="0.7" fill="#b0b0b0"/>
<rect x="653.4" y="126.0" width="0.7" height="0.7" fill="#f0f0f0"/>
<rect x="702.8" y="159.8" width="0.7" height="0.7" fill="#f0f0f0"/>
<rect x="761.1" y="133.3" width="0.7" height="0.7" fill="#f0f0f0"/>
<rect x="722.9" y="172.5" width="0.7" height="0.7" fill="#c4c4c4"/>
<rect x="695.0" y="148.1" width="0.7" height="0.7" fill="#b0b0b0"/>
<rect x="611.6" y="137.9" width="0.7" height="0.7" fill="#b0b0b0"/>
<rect x="740.0" y="160.6" width="0.7" height="0.7" fill="#b0b0b0"/>
<rect x="658.6" y="148.3" width="0.7" height="0.7" fill="#b0b0b0"/>
<rect x="776.7" y="162.6" width="0.7" height="0.7" fill="#b0b0b0"/>
<rect x="621.4" y="132.2" width="0.7" height="0.7" fill="#b0b0b0"/>
<rect x="726.0" y="132.9" width="0.7" height="0.7" fill="#c4c4c4"/>
<rect x="724.8" y="148.8" width="0.7" height="0.7" fill="#bcbcbc"/>
<rect x="707.9" y="147.5" width="0.7" height="0.7" fill="#bcbcbc"/>
<rect x="611.4" y="137.0" width="0.7" height="0.7" fill="#b0b0b0"/>
<rect x="716.7" y="164.9" width="0.7" height="0.7" fill="#c4c4c4"/>
<rect x="609.7" y="156.0" width="0.7" height="0.7" fill="#f0f0f0"/>
<rect x="755.4" y="132.9" width="0.7" height="0.7" fill="#f0f0f0"/>
<rect x="615.7" y="161.8" width="0.7" height="0.7" fill="#f0f0f0"/>
<rect x="686.4" y="175.1" width="0.7" height="0.7" fill="#c4c4c4"/>
<rect x="761.9" y="133.1" width="0.7" height="0.7" fill="#c4c4c4"/>
<rect x="626.3" y="158.9" width="0.7" height="0.7" fill="#c4c4c4"/>
<rect x="761.1" y="154.9" width="0.7" height="0.7" fill="#bcbcbc"/>
<rect x="646.2" y="154.8" width="0.7" height="0.7" fill="#c4c4c4"/>
<rect x="747.3" y="140.7" width="0.7" height="0.7" fill="#bcbcbc"/>
<rect x="742.9" y="171.1" width="0.7" height="0.7" fill="#f0f0f0"/>
<rect x="730.3" y="135.2" width="0.7" height="0.7" fill="#b0b0b0"/>
<rect x="715.8" y="130.3" width="0.7" height="0.7" fill="#b0b0b0"/>
<rect x="615.7" y="132.4" width="0.7" height="0.7" fill="#f0f0f0"/>
<rect x="641.8" y="171.8" width="0.7" height="0.7" fill="#f0f0f0"/>
<rect x="770.5" y="131.4" width="0.7" height="0.7" fill="#b0b0b0"/>
<rect x="695.7" y="146.0" width="0.7" height="0.7" fill="#bcbcbc"/>
<rect x="767.2" y="148.3" width="0.7" height="0.7" fill="#bcbcbc"/>
<rect x="732.6" y="130.2" width="0.7" height="0.7" fill="#f0f0f0"/>
<rect x="745.2" y="133.1" width="0.7" height="0.7" fill="#f0f0f0"/>
<rect x="662.4" y="138.1" width="0.7" height="0.7" fill="#c4c4c4"/>
<rect x="764.7" y="162.8" width="0.7" height="0.7" fill="#f0f0f0"/>
<rect x="666.6" y="163.7" width="0.7" height="0.7" fill="#c4c4c4"/>
<rect x="714.5" y="168.0" width="0.7" height="0.7" fill="#f0f0f0"/>
<rect x="770.1" y="144.8" width="0.7" height="0.7" fill="#b0b0b0"/>
<rect x="704.7" y="155.9" width="0.7" height="0.7" fill="#bcbcbc"/>
<rect x="669.7" y="130.9" width="0.7" height="0.7" fill="#b0b0b0"/>
<rect x="632.6" y="136.1" width="0.7" height="0.7" fill="#f0f0f0"/>
<rect x="757.3" y="151.1" width="0.7" height="0.7" fill="#c4c4c4"/>
<rect x="599.6" y="150.5" width="0.7" height="0.7" fill="#f0f0f0"/>
<rect x="656.9" y="150.0" width="0.7" height="0.7" fill="#bcbcbc"/>
<rect x="627.0" y="134.1" width="0.7" height="0.7" fill="#c4c4c4"/>
<rect x="753.8" y="171.4" width="0.7" height="0.7" fill="#f0f0f0"/>
<rect x="626.5" y="139.1" width="0.7" height="0.7" fill="#c4c4c4"/>
<rect x="744.8" y="165.2" width="0.7" height="0.7" fill="#bcbcbc"/>
<rect x="605.4" y="172.9" width="0.7" height="0.7" fill="#c4c4c4"/>
<rect x="763.6" y="145.2" width="0.7" height="0.7" fill="#b0b0b0"/>
<rect x="721.6" y="161.2" width="0.7" height="0.7" fill="#f0f0f0"/>
<rect x="750.2" y="134.0" width="0.7" height="0.7" fill="#c4c4c4"/>
<rect x="651.2" y="161.2" width="0.7" height="0.7" fill="#bcbcbc"/>
<rect x="605.5" y="163.3" width="0.7" height="0.7" fill="#bcbcbc"/>
<rect x="716.0" y="158.2" width="0.7" height="0.7" fill="#c4c4c4"/>
<rect x="720.3" y="135.5" width="0.7" height="0.7" fill="#c4c4c4"/>
<rect x="649.8" y="164.2" width="0.7" height="0.7" fill="#f0f0f0"/>
<rect x="628.5" y="138.4" width="0.7" height="0.7" fill="#bcbcbc"/>
<rect x="766.4" y="159.7" width="0.7" height="0.7" fill="#f0f0f0"/>
<rect x="728.4" y="140.0" width="0.7" height="0.7" fill="#f0f0f0"/>
<rect x="610.3" y="166.7" width="0.7" height="0.7" fill="#f0f0f0"/>
<rect x="629.6" y="127.5" width="0.7" height="0.7" fill="#c4c4c4"/>
<rect x="766.3" y="163.4" width="0.7" height="0.7" fill="#bcbcbc"/>
<rect x="759.0" y="151.6" width="0.7" height="0.7" fill="#f0f0f0"/>
<rect x="609.0" y="138.6" width="0.7" height="0.7" fill="#b0b0b0"/>
<rect x="687.8" y="166.8" width="0.7" height="0.7" fill="#b0b0b0"/>
<rect x="644.8" y="147.2" width="0.7" height="0.7" fill="#c4c4c4"/>
<rect x="713.2" y="171.7" width="0.7" height="0.7" fill="#bcbcbc"/>
<rect x="631.3" y="152.5" width="0.7" height="0.7" fill="#f0f0f0"/>
<rect x="632.9" y="138.1" width="0.7" height="0.7" fill="#c4c4c4"/>
<rect x="739.9" y="130.4" width="0.7" height="0.7" fill="#bcbcbc"/>
<rect x="705.7" y="170.8" width="0.7" height="0.7" fill="#bcbcbc"/>
<rect x="710.4" y="149.0" width="0.7" height="0.7" fill="#c4c4c4"/>
<rect x="685.9" y="155.8" width="0.7" height="0.7" fill="#f0f0f0"/>
<rect x="692.2" y="132.8" width="0.7" height="0.7" fill="#b0b0b0"/>
<rect x="761.6" y="141.9" width="0.7" height="0.7" fill="#f0f0f0"/>
<rect x="757.7" y="178.3" width="0.7" height="0.7" fill="#b0b0b0"/>
<rect x="624.1" y="151.2" width="0.7" height="0.7" fill="#c4c4c4"/>
<rect x="745.0" y="142.2" width="0.7" height="0.7" fill="#bcbcbc"/>
<rect x="694.8" y="150.6" width="0.7" height="0.7" fill="#b0b0b0"/>
<rect x="741.3" y="176.6" width="0.7" height="0.7" fill="#bcbcbc"/>
<rect x="648.5" y="151.7" width="0.7" height="0.7" fill="#bcbcbc"/>
<rect x="608.0" y="136.3" width="0.7" height="0.7" fill="#c4c4c4"/>
<rect x="756.2" y="172.3" width="0.7" height="0.7" fill="#b0b0b0"/>
<rect x="674.2" y="142.3" width="0.7" height="0.7" fill="#b0b0b0"/>
<rect x="758.6" y="160.1" width="0.7" height="0.7" fill="#bcbcbc"/>
<rect x="701.5" y="149.0" width="0.7" height="0.7" fill="#b0b0b0"/>
<rect x="728.7" y="162.6" width="0.7" height="0.7" fill="#c4c4c4"/>
<rect x="618.4" y="168.1" width="0.7" height="0.7" fill="#bcbcbc"/>
<rect x="656.5" y="141.9" width="0.7" height="0.7" fill="#bcbcbc"/>
<rect x="646.1" y="161.3" width="0.7" height="0.7" fill="#c4c4c4"/>
<rect x="605.5" y="154.3" width="0.7" height="0.7" fill="#b0b0b0"/>
<rect x="604.4" y="128.5" width="0.7" height="0.7" fill="#bcbcbc"/>
<rect x="746.2" y="148.7" width="0.7" height="0.7" fill="#c4c4c4"/>
<rect x="768.0" y="157.9" width="0.7" height="0.7" fill="#bcbcbc"/>
<rect x="693.1" y="132.4" width="0.7" height="0.7" fill="#bcbcbc"/>
<rect x="658.1" y="126.5" width="0.7" height="0.7" fill="#bcbcbc"/>
<rect x="728.5" y="130.8" width="0.7" height="0.7" fill="#bcbcbc"/>
<rect x="711.4" y="133.4" width="0.7" height="0.7" fill="#f0f0f0"/>
<rect x="740.6" y="132.0" width="0.7" height="0.7" fill="#c4c4c4"/>
<rect x="678.6" y="137.8" width="0.7" height="0.7" fill="#f0f0f0"/>
<rect x="629.9" y="128.3" width="0.7" height="0.7" fill="#bcbcbc"/>
<rect x="694.0" y="176.7" width="0.7" height="0.7" fill="#b0b0b0"/>
<rect x="617.9" y="168.5" width="0.7" height="0.7" fill="#f0f0f0"/>
<rect x="721.2" y="136.7" width="0.7" height="0.7" fill="#b0b0b0"/>
<rect x="605.3" y="156.1" width="0.7" height="0.7" fill="#f0f0f0"/>
<rect x="724.6" y="144.4" width="0.7" height="0.7" fill="#f0f0f0"/>
<rect x="637.8" y="140.3" width="0.7" height="0.7" fill="#bcbcbc"/>
<rect x="653.3" y="152.9" width="0.7" height="0.7" fill="#bcbcbc"/>
<rect x="664.6" y="168.3" width="0.7" height="0.7" fill="#b0b0b0"/>
<rect x="709.2" y="146.8" width="0.7" height="0.7" fill="#bcbcbc"/>
<rect x="624.9" y="138.3" width="0.7" height="0.7" fill="#f0f0f0"/>
<rect x="606.2" y="134.7" width="0.7" height="0.7" fill="#b0b0b0"/>
<rect x="733.3" y="140.6" width="0.7" height="0.7" fill="#bcbcbc"/>
<rect x="740.9" y="165.4" width="0.7" height="0.7" fill="#f0f0f0"/>
<rect x="720.7" y="171.1" width="0.7" height="0.7" fill="#b0b0b0"/>
<rect x="741.6" y="145.6" width="0.7" height="0.7" fill="#b0b0b0"/>
<rect x="617.9" y="157.6" width="0.7" height="0.7" fill="#bcbcbc"/>
<rect x="743.9" y="127.0" width="0.7" height="0.7" fill="#b0b0b0"/>
<rect x="707.8" y="152.8" width="0.7" height="0.7" fill="#f0f0f0"/>
<rect x="696.4" y="162.1" width="0.7" height="0.7" fill="#f0f0f0"/>
<rect x="773.9" y="168.6" width="0.7" height="0.7" fill="#b0b0b0"/>
<rect x="694.8" y="167.7" width="0.7" height="0.7" fill="#c4c4c4"/>
<rect x="769.6" y="126.9" width="0.7" height="0.7" fill="#bcbcbc"/>
<rect x="649.9" y="129.9" width="0.7" height="0.7" fill="#b0b0b0"/>
<rect x="736.8" y="157.9" width="0.7" height="0.7" fill="#f0f0f0"/>
<rect x="654.0" y="174.6" width="0.7" height="0.7" fill="#c4c4c4"/>
<rect x="764.4" y="138.1" width="0.7" height="0.7" fill="#b0b0b0"/>
<rect x="733.2" y="161.0" width="0.7" height="0.7" fill="#c4c4c4"/>
<rect x="758.7" y="161.9" width="0.7" height="0.7" fill="#bcbcbc"/>
<rect x="685.2" y="130.6" width="0.7" height="0.7" fill="#b0b0b0"/>
<rect x="641.9" y="177.0" width="0.7" height="0.7" fill="#f0f0f0"/>
<rect x="669.3" y="126.0" width="0.7" height="0.7" fill="#f0f0f0"/>
<rect x="666.6" y="165.2" width="0.7" height="0.7" fill="#bcbcbc"/>
<rect x="761.1" y="158.0" width="0.7" height="0.7" fill="#f0f0f0"/>
<rect x="657.0" y="170.1" width="0.7" height="0.7" fill="#c4c4c4"/>
<rect x="643.7" y="131.1" width="0.7" height="0.7" fill="#c4c4c4"/>
<rect x="653.7" y="139.9" width="0.7" height="0.7" fill="#b0b0b0"/>
<rect x="758.8" y="134.6" width="0.7" height="0.7" fill="#f0f0f0"/>
<rect x="735.6" y="137.6" width="0.7" height="0.7" fill="#b0b0b0"/>
<rect x="700.7" y="158.7" width="0.7" height="0.7" fill="#f0f0f0"/>
<rect x="673.5" y="148.1" width="0.7" height="0.7" fill="#bcbcbc"/>
<rect x="653.2" y="140.5" width="0.7" height="0.7" fill="#c4c4c4"/>
<rect x="632.7" y="127.4" width="0.7" height="0.7" fill="#b0b0b0"/>
<rect x="652.0" y="154.9" width="0.7" height="0.7" fill="#bcbcbc"/>
<rect x="676.5" y="142.9" width="0.7" height="0.7" fill="#b0b0b0"/>
<rect x="714.2" y="162.0" width="0.7" height="0.7" fill="#b0b0b0"/>
<rect x="610.4" y="151.2" width="0.7" height="0.7" fill="#b0b0b0"/>
<rect x="656.0" y="170.4" width="0.7" height="0.7" fill="#f0f0f0"/>
<rect x="764.0" y="137.8" width="0.7" height="0.7" fill="#f0f0f0"/>
<rect x="748.6" y="125.9" width="0.7" height="0.7" fill="#bcbcbc"/>
<rect x="619.3" y="143.4" width="0.7" height="0.7" fill="#c4c4c4"/>
<rect x="708.8" y="131.3" width="0.7" height="0.7" fill="#f0f0f0"/>
<rect x="730.2" y="168.7" width="0.7" height="0.7" fill="#bcbcbc"/>
<rect x="726.1" y="174.3" width="0.7" height="0.7" fill="#b0b0b0"/>
<rect x="664.3" y="168.5" width="0.7" height="0.7" fill="#bcbcbc"/>
<rect x="636.1" y="145.5" width="0.7" height="0.7" fill="#f0f0f0"/>
<rect x="757.6" y="177.7" width="0.7" height="0.7" fill="#b0b0b0"/>
<rect x="643.1" y="175.2" width="0.7" height="0.7" fill="#f0f0f0"/>
<rect x="666.1" y="132.0" width="0.7" height="0.7" fill="#c4c4c4"/>
<rect x="623.1" y="126.0" width="0.7" height="0.7" fill="#f0f0f0"/>
<rect x="770.4" y="175.4" width="0.7" height="0.7" fill="#b0b0b0"/>
<rect x="686.6" y="175.0" width="0.7" height="0.7" fill="#c4c4c4"/>
<rect x="602.3" y="168.3" width="0.7" height="0.7" fill="#c4c4c4"/>
<rect x="732.8" y="136.1" width="0.7" height="0.7" fill="#c4c4c4"/>
<rect x="667.3" y="141.1" width="0.7" height="0.7" fill="#f0f0f0"/>
<rect x="713.5" y="166.0" width="0.7" height="0.7" fill="#b0b0b0"/>
<rect x="701.7" y="141.3" width="0.7" height="0.7" fill="#c4c4c4"/>
<rect x="766.9" y="129.1" width="0.7" height="0.7" fill="#f0f0f0"/>
<rect x="608.4" y="147.9" width="0.7" height="0.7" fill="#bcbcbc"/>
<rect x="647.6" y="163.6" width="0.7" height="0.7" fill="#bcbcbc"/>
<rect x="647.6" y="130.8" width="0.7" height="0.7" fill="#f0f0f0"/>
<rect x="676.3" y="135.2" width="0.7" height="0.7" fill="#f0f0f0"/>
<rect x="751.3" y="138.7" width="0.7" height="0.7" fill="#f0f0f0"/>
<rect x="662.6" y="168.4" width="0.7" height="0.7" fill="#b0b0b0"/>
<rect x="744.7" y="133.2" width="0.7" height="0.7" fill="#b0b0b0"/>
<rect x="603.3" y="155.3" width="0.7" height="0.7" fill="#f0f0f0"/>
<rect x="753.6" y="129.9" width="0.7" height="0.7" fill="#bcbcbc"/>
<rect x="633.9" y="168.0" width="0.7" height="0.7" fill="#b0b0b0"/>
<rect x="683.3" y="130.3" width="0.7" height="0.7" fill="#c4c4c4"/>
<rect x="705.7" y="169.9" width="0.7" height="0.7" fill="#f0f0f0"/>
<rect x="689.6" y="128.6" width="0.7" height="0.7" fill="#f0f0f0"/>
<rect x="736.3" y="152.1" width="0.7" height="0.7" fill="#b0b0b0"/>
<rect x="637.8" y="147.9" width="0.7" height="0.7" fill="#f0f0f0"/>
<rect x="743.7" y="169.0" width="0.7" height="0.7" fill="#f0f0f0"/>
<rect x="762.0" y="145.7" width="0.7" height="0.7" fill="#bcbcbc"/>
<rect x="757.8" y="133.6" width="0.7" height="0.7" fill="#bcbcbc"/>
<rect x="674.4" y="176.8" width="0.7" height="0.7" fill="#c4c4c4"/>
<rect x="638.0" y="147.9" width="0.7" height="0.7" fill="#c4c4c4"/>
<rect x="624.2" y="144.9" width="0.7" height="0.7" fill="#b0b0b0"/>
<rect x="717.8" y="132.3" width="0.7" height="0.7" fill="#bcbcbc"/>
<rect x="734.1" y="129.8" width="0.7" height="0.7" fill="#f0f0f0"/>
<rect x="605.9" y="147.3" width="0.7" height="0.7" fill="#bcbcbc"/>
<rect x="634.4" y="126.8" width="0.7" height="0.7" fill="#f0f0f0"/>
<rect x="770.0" y="157.2" width="0.7" height="0.7" fill="#bcbcbc"/>
<rect x="682.6" y="129.9" width="0.7" height="0.7" fill="#c4c4c4"/>
<rect x="765.9" y="127.4" width="0.7" height="0.7" fill="#bcbcbc"/>
<rect x="743.7" y="130.3" width="0.7" height="0.7" fill="#bcbcbc"/>
<rect x="733.3" y="145.4" width="0.7" height="0.7" fill="#bcbcbc"/>
<rect x="626.5" y="153.0" width="0.7" height="0.7" fill="#b0b0b0"/>
<rect x="649.8" y="131.4" width="0.7" height="0.7" fill="#f0f0f0"/>
<rect x="666.1" y="145.2" width="0.7" height="0.7" fill="#f0f0f0"/>
<rect x="696.7" y="149.1" width="0.7" height="0.7" fill="#bcbcbc"/>
<rect x="770.8" y="133.2" width="0.7" height="0.7" fill="#b0b0b0"/>
<rect x="696.3" y="164.2" width="0.7" height="0.7" fill="#bcbcbc"/>
<rect x="641.7" y="160.7" width="0.7" height="0.7" fill="#b0b0b0"/>
<rect x="600.9" y="166.3" width="0.7" height="0.7" fill="#f0f0f0"/>
<rect x="640.8" y="163.4" width="0.7" height="0.7" fill="#bcbcbc"/>
<rect x="740.2" y="128.7" width="0.7" height="0.7" fill="#bcbcbc"/>
<rect x="606.3" y="146.0" width="0.7" height="0.7" fill="#c4c4c4"/>
<rect x="737.3" y="155.1" width="0.7" height="0.7" fill="#f0f0f0"/>
<rect x="679.4" y="160.2" width="0.7" height="0.7" fill="#c4c4c4"/>
<rect x="700.4" y="140.3" width="0.7" height="0.7" fill="#f0f0f0"/>
<rect x="774.9" y="141.6" width="0.7" height="0.7" fill="#bcbcbc"/>
<rect x="704.4" y="161.6" width="0.7" height="0.7" fill="#f0f0f0"/>
<rect x="609.3" y="136.9" width="0.7" height="0.7" fill="#f0f0f0"/>
<rect x="617.0" y="152.8" width="0.7" height="0.7" fill="#c4c4c4"/>
<rect x="746.8" y="133.0" width="0.7" height="0.7" fill="#c4c4c4"/>
<rect x="610.7" y="126.0" width="0.7" height="0.7" fill="#bcbcbc"/>
<rect x="700.1" y="128.0" width="0.7" height="0.7" fill="#b0b0b0"/>
<rect x="620.2" y="172.3" width="0.7" height="0.7" fill="#c4c4c4"/>
<rect x="771.2" y="139.6" width="0.7" height="0.7" fill="#c4c4c4"/>
<rect x="685.4" y="133.4" width="0.7" height="0.7" fill="#b0b0b0"/>
<rect x="646.0" y="169.3" width="0.7" height="0.7" fill="#c4c4c4"/>
<rect x="668.5" y="158.8" width="0.7" height="0.7" fill="#bcbcbc"/>
<rect x="724.1" y="156.9" width="0.7" height="0.7" fill="#f0f0f0"/>
<rect x="761.9" y="169.7" width="0.7" height="0.7" fill="#bcbcbc"/>
<rect x="699.9" y="173.1" width="0.7" height="0.7" fill="#c4c4c4"/>
<rect x="699.1" y="126.3" width="0.7" height="0.7" fill="#b0b0b0"/>
<rect x="722.6" y="157.9" width="0.7" height="0.7" fill="#b0b0b0"/>
<rect x="604.1" y="147.4" width="0.7" height="0.7" fill="#f0f0f0"/>
<rect x="727.5" y="157.9" width="0.7" height="0.7" fill="#bcbcbc"/>
<rect x="694.7" y="162.3" width="0.7" height="0.7" fill="#b0b0b0"/>
<rect x="727.2" y="156.9" width="0.7" height="0.7" fill="#b0b0b0"/>
<rect x="611.4" y="150.0" width="0.7" height="0.7" fill="#b0b0b0"/>
<rect x="769.3" y="161.5" width="0.7" height="0.7" fill="#c4c4c4"/>
<rect x="620.9" y="165.4" width="0.7" height="0.7" fill="#c4c4c4"/>
<rect x="680.0" y="141.5" width="0.7" height="0.7" fill="#c4c4c4"/>
<rect x="691.0" y="173.2" width="0.7" height="0.7" fill="#f0f0f0"/>
<rect x="667.1" y="160.2" width="0.7" height="0.7" fill="#c4c4c4"/>
<rect x="655.3" y="157.9" width="0.7" height="0.7" fill="#f0f0f0"/>
<rect x="615.2" y="144.3" width="0.7" height="0.7" fill="#b0b0b0"/>
<rect x="713.1" y="148.8" width="0.7" height="0.7" fill="#f0f0f0"/>
<rect x="630.5" y="133.1" width="0.7" height="0.7" fill="#f0f0f0"/>
<rect x="629.6" y="152.2" width="0.7" height="0.7" fill="#c4c4c4"/>
<rect x="761.4" y="133.4" width="0.7" height="0.7" fill="#c4c4c4"/>
<rect x="699.5" y="152.2" width="0.7" height="0.7" fill="#bcbcbc"/>
<rect x="698.1" y="160.6" width="0.7" height="0.7" fill="#f0f0f0"/>
<rect x="697.5" y="139.0" width="0.7" height="0.7" fill="#c4c4c4"/>
<rect x="651.6" y="131.5" width="0.7" height="0.7" fill="#c4c4c4"/>
<rect x="675.0" y="170.2" width="0.7" height="0.7" fill="#c4c4c4"/>
<rect x="685.9" y="163.0" width="0.7" height="0.7" fill="#b0b0b0"/>
<rect x="769.2" y="131.9" width="0.7" height="0.7" fill="#b0b0b0"/>
<rect x="659.2" y="131.2" width="0.7" height="0.7" fill="#c4c4c4"/>
<rect x="749.4" y="156.4" width="0.7" height="0.7" fill="#b0b0b0"/>
<rect x="737.3" y="154.3" width="0.7" height="0.7" fill="#bcbcbc"/>
<rect x="712.4" y="163.8" width="0.7" height="0.7" fill="#c4c4c4"/>
<rect x="617.2" y="170.8" width="0.7" height="0.7" fill="#b0b0b0"/>
<rect x="654.9" y="141.2" width="0.7" height="0.7" fill="#c4c4c4"/>
<rect x="672.4" y="171.5" width="0.7" height="0.7" fill="#b0b0b0"/>
<rect x="611.2" y="129.4" width="0.7" height="0.7" fill="#b0b0b0"/>
<rect x="767.0" y="167.3" width="0.7" height="0.7" fill="#f0f0f0"/>
<rect x="618.0" y="147.6" width="0.7" height="0.7" fill="#bcbcbc"/>
<rect x="674.4" y="175.1" width="0.7" height="0.7" fill="#c4c4c4"/>
<rect x="715.1" y="161.6" width="0.7" height="0.7" fill="#c4c4c4"/>
<rect x="765.1" y="175.5" width="0.7" height="0.7" fill="#f0f0f0"/>
<rect x="667.0" y="134.7" width="0.7" height="0.7" fill="#bcbcbc"/>
<rect x="619.9" y="154.0" width="0.7" height="0.7" fill="#b0b0b0"/>
<rect x="715.7" y="160.6" width="0.7" height="0.7" fill="#f0f0f0"/>
<rect x="677.2" y="140.1" width="0.7" height="0.7" fill="#f0f0f0"/>
<rect x="772.2" y="148.3" width="0.7" height="0.7" fill="#bcbcbc"/>
<rect x="756.0" y="177.3" width="0.7" height="0.7" fill="#bcbcbc"/>
<rect x="667.3" y="159.1" width="0.7" height="0.7" fill="#bcbcbc"/>
<rect x="657.3" y="168.4" width="0.7" height="0.7" fill="#b0b0b0"/>
<rect x="624.3" y="128.6" width="0.7" height="0.7" fill="#f0f0f0"/>
<rect x="653.9" y="154.8" width="0.7" height="0.7" fill="#c4c4c4"/>
<rect x="649.9" y="164.9" width="0.7" height="0.7" fill="#c4c4c4"/>
<rect x="680.6" y="147.0" width="0.7" height="0.7" fill="#b0b0b0"/>
<rect x="623.3" y="136.4" width="0.7" height="0.7" fill="#b0b0b0"/>
<rect x="678.5" y="138.1" width="0.7" height="0.7" fill="#bcbcbc"/>
<rect x="629.3" y="130.5" width="0.7" height="0.7" fill="#f0f0f0"/>
<rect x="645.1" y="150.2" width="0.7" height="0.7" fill="#bcbcbc"/>
<rect x="741.8" y="151.1" width="0.7" height="0.7" fill="#c4c4c4"/>
<rect x="702.5" y="139.0" width="0.7" height="0.7" fill="#c4c4c4"/>
<rect x="723.3" y="154.3" width="0.7" height="0.7" fill="#b0b0b0"/>
<rect x="636.2" y="127.0" width="0.7" height="0.7" fill="#f0f0f0"/>
<rect x="712.9" y="151.5" width="0.7" height="0.7" fill="#c4c4c4"/>
<rect x="707.0" y="128.8" width="0.7" height="0.7" fill="#c4c4c4"/>
<rect x="623.1" y="147.9" width="0.7" height="0.7" fill="#f0f0f0"/>
<rect x="665.3" y="166.4" width="0.7" height="0.7" fill="#c4c4c4"/>
<rect x="715.8" y="165.5" width="0.7" height="0.7" fill="#b0b0b0"/>
<rect x="599.7" y="175.3" width="0.7" height="0.7" fill="#c4c4c4"/>
<rect x="770.5" y="147.7" width="0.7" height="0.7" fill="#c4c4c4"/>
<rect x="674.2" y="169.8" width="0.7" height="0.7" fill="#f0f0f0"/>
<rect x="659.8" y="164.2" width="0.7" height="0.7" fill="#c4c4c4"/>
<rect x="725.8" y="158.1" width="0.7" height="0.7" fill="#b0b0b0"/>
<rect x="627.8" y="151.8" width="0.7" height="0.7" fill="#b0b0b0"/>
<rect x="695.2" y="151.1" width="0.7" height="0.7" fill="#f0f0f0"/>
<rect x="748.1" y="128.1" width="0.7" height="0.7" fill="#b0b0b0"/>
<rect x="684.5" y="132.1" width="0.7" height="0.7" fill="#bcbcbc"/>
<rect x="629.5" y="134.8" width="0.7" height="0.7" fill="#bcbcbc"/>
<rect x="717.7" y="146.8" width="0.7" height="0.7" fill="#b0b0b0"/>
<rect x="667.8" y="159.6" width="0.7" height="0.7" fill="#bcbcbc"/>
<rect x="714.1" y="174.1" width="0.7" height="0.7" fill="#bcbcbc"/>
<rect x="716.1" y="156.3" width="0.7" height="0.7" fill="#c4c4c4"/>
<rect x="676.7" y="141.9" width="0.7" height="0.7" fill="#b0b0b0"/>
<rect x="665.7" y="157.1" width="0.7" height="0.7" fill="#f0f0f0"/>
<rect x="738.8" y="163.9" width="0.7" height="0.7" fill="#c4c4c4"/>
<rect x="693.7" y="125.9" width="0.7" height="0.7" fill="#f0f0f0"/>
<rect x="609.6" y="126.6" width="0.7" height="0.7" fill="#bcbcbc"/>
<rect x="618.4" y="149.9" width="0.7" height="0.7" fill="#f0f0f0"/>
<rect x="759.0" y="150.4" width="0.7" height="0.7" fill="#c4c4c4"/>
<rect x="692.1" y="127.1" width="0.7" height="0.7" fill="#f0f0f0"/>
<rect x="747.7" y="158.0" width="0.7" height="0.7" fill="#bcbcbc"/>
<rect x="603.1" y="172.2" width="0.7" height="0.7" fill="#bcbcbc"/>
<rect x="771.4" y="162.4" width="0.7" height="0.7" fill="#bcbcbc"/>
<rect x="617.3" y="145.2" width="0.7" height="0.7" fill="#b0b0b0"/>
<rect x="630.1" y="146.6" width="0.7" height="0.7" fill="#b0b0b0"/>
<rect x="675.6" y="141.6" width="0.7" height="0.7" fill="#f0f0f0"/>
<rect x="669.0" y="166.3" width="0.7" height="0.7" fill="#b0b0b0"/>
<rect x="758.3" y="162.0" width="0.7" height="0.7" fill="#bcbcbc"/>
<rect x="622.9" y="173.1" width="0.7" height="0.7" fill="#bcbcbc"/>
<rect x="672.0" y="127.2" width="0.7" height="0.7" fill="#f0f0f0"/>
<rect x="692.7" y="136.4" width="0.7" height="0.7" fill="#c4c4c4"/>
<rect x="734.9" y="171.5" width="0.7" height="0.7" fill="#f0f0f0"/>
<rect x="740.3" y="147.6" width="0.7" height="0.7" fill="#f0f0f0"/>
<rect x="729.5" y="136.4" width="0.7" height="0.7" fill="#c4c4c4"/>
<rect x="726.6" y="171.3" width="0.7" height="0.7" fill="#b0b0b0"/>
<rect x="633.6" y="153.8" width="0.7" height="0.7" fill="#bcbcbc"/>
<rect x="664.4" y="130.8" width="0.7" height="0.7" fill="#f0f0f0"/>
<rect x="663.8" y="133.4" width="0.7" height="0.7" fill="#c4c4c4"/>
<rect x="631.8" y="154.4" width="0.7" height="0.7" fill="#f0f0f0"/>
<rect x="767.8" y="164.8" width="0.7" height="0.7" fill="#f0f0f0"/>
<rect x="769.5" y="169.6" width="0.7" height="0.7" fill="#c4c4c4"/>
<rect x="728.4" y="172.3" width="0.7" height="0.7" fill="#f0f0f0"/>
<rect x="626.2" y="126.2" width="0.7" height="0.7" fill="#b0b0b0"/>
<rect x="727.8" y="145.2" width="0.7" height="0.7" fill="#f0f0f0"/>
<rect x="646.5" y="155.8" width="0.7" height="0.7" fill="#c4c4c4"/>
<rect x="707.4" y="154.0" width="0.7" height="0.7" fill="#bcbcbc"/>
<rect x="669.3" y="155.1" width="0.7" height="0.7" fill="#b0b0b0"/>
<rect x="640.3" y="141.3" width="0.7" height="0.7" fill="#b0b0b0"/>
<rect x="737.3" y="151.2" width="0.7" height="0.7" fill="#b0b0b0"/>
<rect x="717.6" y="157.0" width="0.7" height="0.7" fill="#b0b0b0"/>
<rect x="613.9" y="142.9" width="0.7" height="0.7" fill="#bcbcbc"/>
<rect x="656.4" y="170.8" width="0.7" height="0.7" fill="#b0b0b0"/>
<rect x="654.4" y="161.4" width="0.7" height="0.7" fill="#b0b0b0"/>
<rect x="764.0" y="172.5" width="0.7" height="0.7" fill="#b0b0b0"/>
<rect x="606.7" y="152.7" width="0.7" height="0.7" fill="#f0f0f0"/>
<rect x="637.9" y="141.8" width="0.7" height="0.7" fill="#f0f0f0"/>
<rect x="648.9" y="149.4" width="0.7" height="0.7" fill="#b0b0b0"/>
<rect x="771.7" y="152.9" width="0.7" height="0.7" fill="#c4c4c4"/>
<rect x="747.1" y="156.8" width="0.7" height="0.7" fill="#b0b0b0"/>
<rect x="764.8" y="141.1" width="0.7" height="0.7" fill="#b0b0b0"/>
<rect x="627.9" y="158.7" width="0.7" height="0.7" fill="#f0f0f0"/>
<rect x="615.1" y="143.8" width="0.7" height="0.7" fill="#bcbcbc"/>
<rect x="662.7" y="131.3" width="0.7" height="0.7" fill="#c4c4c4"/>
<rect x="616.9" y="171.1" width="0.7" height="0.7" fill="#c4c4c4"/>
<rect x="605.8" y="176.5" width="0.7" height="0.7" fill="#b0b0b0"/>
<rect x="705.1" y="172.5" width="0.7" height="0.7" fill="#c4c4c4"/>
<rect x="646.4" y="169.0" width="0.7" height="0.7" fill="#c4c4c4"/>
<rect x="690.6" y="130.7" width="0.7" height="0.7" fill="#f0f0f0"/>
<rect x="672.8" y="136.1" width="0.7" height="0.7" fill="#f0f0f0"/>
<rect x="765.3" y="132.3" width="0.7" height="0.7" fill="#b0b0b0"/>
<rect x="677.4" y="171.9" width="0.7" height="0.7" fill="#c4c4c4"/>
<rect x="739.1" y="147.9" width="0.7" height="0.7" fill="#b0b0b0"/>
<rect x="630.6" y="149.2" width="0.7" height="0.7" fill="#c4c4c4"/>
<rect x="606.9" y="131.5" width="0.7" height="0.7" fill="#b0b0b0"/>
<rect x="611.5" y="130.1" width="0.7" height="0.7" fill="#c4c4c4"/>
<rect x="650.0" y="160.3" width="0.7" height="0.7" fill="#b0b0b0"/>
<rect x="676.4" y="141.4" width="0.7" height="0.7" fill="#c4c4c4"/>
<rect x="693.2" y="178.1" width="0.7" height="0.7" fill="#f0f0f0"/>
<rect x="748.9" y="158.3" width="0.7" height="0.7" fill="#b0b0b0"/>
<rect x="631.0" y="150.7" width="0.7" height="0.7" fill="#c4c4c4"/>
<rect x="750.3" y="130.4" width="0.7" height="0.7" fill="#f0f0f0"/>
<rect x="756.6" y="145.3" width="0.7" height="0.7" fill="#c4c4c4"/>
<rect x="766.9" y="175.2" width="0.7" height="0.7" fill="#f0f0f0"/>
<rect x="670.8" y="149.4" width="0.7" height="0.7" fill="#c4c4c4"/>
<rect x="622.6" y="165.0" width="0.7" height="0.7" fill="#f0f0f0"/>
<rect x="662.9" y="135.3" width="0.7" height="0.7" fill="#f0f0f0"/>
<rect x="601.2" y="161.7" width="0.7" height="0.7" fill="#c4c4c4"/>
<rect x="644.8" y="158.3" width="0.7" height="0.7" fill="#f0f0f0"/>
<rect x="761.2" y="152.9" width="0.7" height="0.7" fill="#b0b0b0"/>
<rect x="650.3" y="127.7" width="0.7" height="0.7" fill="#bcbcbc"/>
<rect x="716.5" y="138.6" width="0.7" height="0.7" fill="#f0f0f0"/>
<rect x="754.8" y="160.9" width="0.7" height="0.7" fill="#b0b0b0"/>
<rect x="759.4" y="166.7" width="0.7" height="0.7" fill="#c4c4c4"/>
<rect x="617.1" y="143.5" width="0.7" height="0.7" fill="#c4c4c4"/>
<rect x="628.3" y="174.8" width="0.7" height="0.7" fill="#b0b0b0"/>
<rect x="634.3" y="127.5" width="0.7" height="0.7" fill="#f0f0f0"/>
<rect x="692.9" y="128.2" width="0.7" height="0.7" fill="#bcbcbc"/>
<rect x="775.7" y="143.1" width="0.7" height="0.7" fill="#c4c4c4"/>
<rect x="638.7" y="149.7" width="0.7" height="0.7" fill="#b0b0b0"/>
<rect x="723.5" y="165.6" width="0.7" height="0.7" fill="#b0b0b0"/>
<rect x="774.2" y="142.2" width="0.7" height="0.7" fill="#bcbcbc"/>
<rect x="759.1" y="159.1" width="0.7" height="0.7" fill="#c4c4c4"/>
<rect x="738.4" y="139.2" width="0.7" height="0.7" fill="#bcbcbc"/>
<rect x="737.4" y="141.9" width="0.7" height="0.7" fill="#f0f0f0"/>
<rect x="630.6" y="163.6" width="0.7" height="0.7" fill="#f0f0f0"/>
<rect x="748.3" y="166.1" width="0.7" height="0.7" fill="#f0f0f0"/>
<rect x="750.3" y="170.5" width="0.7" height="0.7" fill="#bcbcbc"/>
<rect x="667.5" y="155.9" width="0.7" height="0.7" fill="#c4c4c4"/>
<rect x="685.5" y="161.9" width="0.7" height="0.7" fill="#b0b0b0"/>
<rect x="680.7" y="132.1" width="0.7" height="0.7" fill="#b0b0b0"/>
<rect x="763.6" y="142.6" width="0.7" height="0.7" fill="#bcbcbc"/>
<rect x="769.4" y="151.4" width="0.7" height="0.7" fill="#b0b0b0"/>
<rect x="704.6" y="142.7" width="0.7" height="0.7" fill="#f0f0f0"/>
<rect x="662.2" y="139.9" width="0.7" height="0.7" fill="#bcbcbc"/>
<rect x="751.3" y="167.3" width="0.7" height="0.7" fill="#c4c4c4"/>
<rect x="679.9" y="161.8" width="0.7" height="0.7" fill="#bcbcbc"/>
<rect x="640.0" y="126.1" width="0.7" height="0.7" fill="#c4c4c4"/>
<rect x="615.3" y="138.2" width="0.7" height="0.7" fill="#f0f0f0"/>
<rect x="717.4" y="156.5" width="0.7" height="0.7" fill="#c4c4c4"/>
<rect x="748.9" y="133.1" width="0.7" height="0.7" fill="#bcbcbc"/>
<rect x="620.6" y="156.9" width="0.7" height="0.7" fill="#f0f0f0"/>
<rect x="638.9" y="148.9" width="0.7" height="0.7" fill="#c4c4c4"/>
<rect x="722.1" y="130.0" width="0.7" height="0.7" fill="#bcbcbc"/>
<rect x="704.2" y="167.8" width="0.7" height="0.7" fill="#b0b0b0"/>
<rect x="719.5" y="159.4" width="0.7" height="0.7" fill="#f0f0f0"/>
<rect x="767.2" y="177.9" width="0.7" height="0.7" fill="#b0b0b0"/>
<rect x="653.1" y="155.2" width="0.7" height="0.7" fill="#bcbcbc"/>
<rect x="715.8" y="142.2" width="0.7" height="0.7" fill="#c4c4c4"/>
<rect x="748.3" y="170.5" width="0.7" height="0.7" fill="#c4c4c4"/>
<rect x="623.2" y="149.2" width="0.7" height="0.7" fill="#bcbcbc"/>
<rect x="731.1" y="157.9" width="0.7" height="0.7" fill="#b0b0b0"/>
<rect x="761.6" y="135.3" width="0.7" height="0.7" fill="#b0b0b0"/>
<rect x="634.7" y="163.4" width="0.7" height="0.7" fill="#c4c4c4"/>
<rect x="670.5" y="173.6" width="0.7" height="0.7" fill="#b0b0b0"/>
<rect x="713.1" y="142.2" width="0.7" height="0.7" fill="#b0b0b0"/>
<rect x="710.4" y="126.9" width="0.7" height="0.7" fill="#bcbcbc"/>
<rect x="767.0" y="168.1" width="0.7" height="0.7" fill="#f0f0f0"/>
<rect x="678.0" y="139.3" width="0.7" height="0.7" fill="#f0f0f0"/>
<rect x="669.6" y="177.2" width="0.7" height="0.7" fill="#f0f0f0"/>
<rect x="717.9" y="163.6" width="0.7" height="0.7" fill="#f0f0f0"/>
<rect x="766.1" y="129.0" width="0.7" height="0.7" fill="#f0f0f0"/>
<rect x="708.3" y="128.1" width="0.7" height="0.7" fill="#c4c4c4"/>
<rect x="658.2" y="161.7" width="0.7" height="0.7" fill="#c4c4c4"/>
<rect x="676.1" y="168.2" width="0.7" height="0.7" fill="#bcbcbc"/>
<rect x="763.8" y="163.0" width="0.7" height="0.7" fill="#bcbcbc"/>
<rect x="700.0" y="167.0" width="0.7" height="0.7" fill="#b0b0b0"/>
<rect x="649.7" y="177.3" width="0.7" height="0.7" fill="#f0f0f0"/>
<rect x="686.8" y="153.3" width="0.7" height="0.7" fill="#bcbcbc"/>
<rect x="735.3" y="150.4" width="0.7" height="0.7" fill="#f0f0f0"/>
<rect x="678.1" y="155.5" width="0.7" height="0.7" fill="#bcbcbc"/>
<rect x="657.0" y="163.3" width="0.7" height="0.7" fill="#bcbcbc"/>
<rect x="614.5" y="166.6" width="0.7" height="0.7" fill="#f0f0f0"/>
<rect x="695.3" y="167.3" width="0.7" height="0.7" fill="#bcbcbc"/>
<rect x="601.9" y="162.4" width="0.7" height="0.7" fill="#bcbcbc"/>
<rect x="769.6" y="168.0" width="0.7" height="0.7" fill="#b0b0b0"/>
<rect x="749.0" y="149.0" width="0.7" height="0.7" fill="#bcbcbc"/>
<rect x="767.4" y="165.5" width="0.7" height="0.7" fill="#c4c4c4"/>
<rect x="739.5" y="148.7" width="0.7" height="0.7" fill="#c4c4c4"/>
<rect x="726.3" y="176.7" width="0.7" height="0.7" fill="#f0f0f0"/>
<rect x="690.4" y="170.3" width="0.7" height="0.7" fill="#c4c4c4"/>
<rect x="608.2" y="176.2" width="0.7" height="0.7" fill="#c4c4c4"/>
<rect x="601.1" y="177.7" width="0.7" height="0.7" fill="#bcbcbc"/>
<rect x="633.3" y="174.6" width="0.7" height="0.7" fill="#c4c4c4"/>
<rect x="772.0" y="137.9" width="0.7" height="0.7" fill="#bcbcbc"/>
<rect x="678.2" y="129.3" width="0.7" height="0.7" fill="#f0f0f0"/>
<rect x="758.6" y="150.8" width="0.7" height="0.7" fill="#c4c4c4"/>
<rect x="673.0" y="137.1" width="0.7" height="0.7" fill="#f0f0f0"/>
<rect x="599.5" y="132.1" width="0.7" height="0.7" fill="#bcbcbc"/>
<rect x="641.6" y="140.9" width="0.7" height="0.7" fill="#bcbcbc"/>
<rect x="766.7" y="144.4" width="0.7" height="0.7" fill="#bcbcbc"/>
<rect x="775.8" y="131.3" width="0.7" height="0.7" fill="#f0f0f0"/>
<rect x="644.4" y="153.7" width="0.7" height="0.7" fill="#c4c4c4"/>
<rect x="607.2" y="160.8" width="0.7" height="0.7" fill="#b0b0b0"/>
<rect x="617.4" y="141.6" width="0.7" height="0.7" fill="#bcbcbc"/>
<rect x="695.9" y="171.7" width="0.7" height="0.7" fill="#c4c4c4"/>
<rect x="657.4" y="135.5" width="0.7" height="0.7" fill="#f0f0f0"/>
<rect x="758.4" y="148.1" width="0.7" height="0.7" fill="#b0b0b0"/>
<rect x="619.8" y="169.6" width="0.7" height="0.7" fill="#f0f0f0"/>
<rect x="730.4" y="168.4" width="0.7" height="0.7" fill="#b0b0b0"/>
<rect x="655.2" y="155.2" width="0.7" height="0.7" fill="#bcbcbc"/>
<rect x="760.9" y="173.5" width="0.7" height="0.7" fill="#bcbcbc"/>
<rect x="664.0" y="176.4" width="0.7" height="0.7" fill="#c4c4c4"/>
<rect x="648.9" y="148.7" width="0.7" height="0.7" fill="#b0b0b0"/>
<rect x="680.0" y="142.1" width="0.7" height="0.7" fill="#f0f0f0"/>
<rect x="617.0" y="153.1" width="0.7" height="0.7" fill="#b0b0b0"/>
<rect x="642.9" y="148.0" width="0.7" height="0.7" fill="#b0b0b0"/>
<rect x="703.0" y="159.5" width="0.7" height="0.7" fill="#f0f0f0"/>
<rect x="692.4" y="161.1" width="0.7" height="0.7" fill="#f0f0f0"/>
<rect x="692.0" y="145.1" width="0.7" height="0.7" fill="#bcbcbc"/>
<rect x="725.7" y="127.1" width="0.7" height="0.7" fill="#f0f0f0"/>
<rect x="672.9" y="176.2" width="0.7" height="0.7" fill="#f0f0f0"/>
<rect x="659.4" y="138.1" width="0.7" height="0.7" fill="#c4c4c4"/>
<rect x="760.3" y="139.4" width="0.7" height="0.7" fill="#bcbcbc"/>
<rect x="750.8" y="151.2" width="0.7" height="0.7" fill="#b0b0b0"/>
<rect x="646.8" y="158.1" width="0.7" height="0.7" fill="#c4c4c4"/>
<rect x="774.8" y="148.5" width="0.7" height="0.7" fill="#f0f0f0"/>
<rect x="765.7" y="160.7" width="0.7" height="0.7" fill="#b0b0b0"/>
<rect x="640.8" y="153.0" width="0.7" height="0.7" fill="#bcbcbc"/>
<rect x="636.6" y="138.1" width="0.7" height="0.7" fill="#b0b0b0"/>
<rect x="737.1" y="148.3" width="0.7" height="0.7" fill="#bcbcbc"/>
<rect x="678.6" y="172.8" width="0.7" height="0.7" fill="#f0f0f0"/>
<rect x="701.3" y="171.1" width="0.7" height="0.7" fill="#f0f0f0"/>
<rect x="767.7" y="171.2" width="0.7" height="0.7" fill="#f0f0f0"/>
<rect x="619.9" y="150.4" width="0.7" height="0.7" fill="#b0b0b0"/>
<rect x="773.5" y="142.7" width="0.7" height="0.7" fill="#c4c4c4"/>
<rect x="748.1" y="174.9" width="0.7" height="0.7" fill="#bcbcbc"/>
<rect x="612.5" y="140.5" width="0.7" height="0.7" fill="#c4c4c4"/>
<rect x="760.8" y="161.5" width="0.7" height="0.7" fill="#b0b0b0"/>
<rect x="731.4" y="145.3" width="0.7" height="0.7" fill="#bcbcbc"/>
<rect x="750.4" y="145.8" width="0.7" height="0.7" fill="#f0f0f0"/>
<rect x="665.7" y="139.8" width="0.7" height="0.7" fill="#f0f0f0"/>
<rect x="747.9" y="137.3" width="0.7" height="0.7" fill="#bcbcbc"/>
<rect x="733.0" y="174.8" width="0.7" height="0.7" fill="#b0b0b0"/>
<rect x="660.2" y="128.1" width="0.7" height="0.7" fill="#bcbcbc"/>
<rect x="760.9" y="148.2" width="0.7" height="0.7" fill="#f0f0f0"/>
<rect x="718.7" y="131.8" width="0.7" height="0.7" fill="#bcbcbc"/>
<rect x="665.1" y="146.5" width="0.7" height="0.7" fill="#b0b0b0"/>
<rect x="666.6" y="142.3" width="0.7" height="0.7" fill="#bcbcbc"/>
<rect x="661.4" y="147.5" width="0.7" height="0.7" fill="#c4c4c4"/>
<rect x="748.4" y="142.1" width="0.7" height="0.7" fill="#c4c4c4"/>
<rect x="629.8" y="172.2" width="0.7" height="0.7" fill="#b0b0b0"/>
<rect x="734.0" y="143.0" width="0.7" height="0.7" fill="#b0b0b0"/>
<rect x="712.9" y="144.6" width="0.7" height="0.7" fill="#c4c4c4"/>
<rect x="615.4" y="133.6" width="0.7" height="0.7" fill="#c4c4c4"/>
<rect x="688.8" y="151.4" width="0.7" height="0.7" fill="#bcbcbc"/>
<rect x="683.5" y="175.5" width="0.7" height="0.7" fill="#f0f0f0"/>
<rect x="774.2" y="140.0" width="0.7" height="0.7" fill="#b0b0b0"/>
<rect x="739.7" y="163.2" width="0.7" height="0.7" fill="#bcbcbc"/>
<rect x="618.3" y="165.5" width="0.7" height="0.7" fill="#b0b0b0"/>
<rect x="725.0" y="155.9" width="0.7" height="0.7" fill="#c4c4c4"/>
<rect x="736.2" y="170.3" width="0.7" height="0.7" fill="#c4c4c4"/>
<rect x="766.8" y="161.9" width="0.7" height="0.7" fill="#b0b0b0"/>
<rect x="723.9" y="137.3" width="0.7" height="0.7" fill="#bcbcbc"/>
<rect x="722.1" y="177.4" width="0.7" height="0.7" fill="#c4c4c4"/>
<rect x="650.5" y="172.5" width="0.7" height="0.7" fill="#f0f0f0"/>
<rect x="725.5" y="133.1" width="0.7" height="0.7" fill="#f0f0f0"/>
<rect x="650.5" y="158.3" width="0.7" height="0.7" fill="#f0f0f0"/>
<rect x="656.7" y="139.7" width="0.7" height="0.7" fill="#c4c4c4"/>
<rect x="605.6" y="140.7" width="0.7" height="0.7" fill="#f0f0f0"/>
<rect x="683.1" y="155.3" width="0.7" height="0.7" fill="#bcbcbc"/>
<rect x="646.0" y="129.8" width="0.7" height="0.7" fill="#b0b0b0"/>
<rect x="614.3" y="131.3" width="0.7" height="0.7" fill="#f0f0f0"/>
<rect x="773.1" y="158.4" width="0.7" height="0.7" fill="#c4c4c4"/>
<rect x="774.7" y="151.9" width="0.7" height="0.7" fill="#f0f0f0"/>
<rect x="606.0" y="157.4" width="0.7" height="0.7" fill="#c4c4c4"/>
<rect x="734.4" y="156.0" width="0.7" height="0.7" fill="#b0b0b0"/>
<rect x="749.8" y="177.8" width="0.7" height="0.7" fill="#bcbcbc"/>
<rect x="704.0" y="156.0" width="0.7" height="0.7" fill="#b0b0b0"/>
<rect x="599.5" y="178.6" width="177.5" height="9.4" fill="#c9b590"/>
<ellipse cx="629.2" cy="185.5" rx="1.6" ry="1.3" fill="#f3f3f3" stroke="#8f8f8f" stroke-width="0.5"/>
<ellipse cx="743.0" cy="184.2" rx="1.5" ry="1.2" fill="#f3f3f3" stroke="#8f8f8f" stroke-width="0.5"/>
<ellipse cx="703.6" cy="181.0" rx="1.8" ry="1.4" fill="#f3f3f3" stroke="#8f8f8f" stroke-width="0.5"/>
<ellipse cx="776.6" cy="185.9" rx="1.9" ry="1.5" fill="#f3f3f3" stroke="#8f8f8f" stroke-width="0.5"/>
<ellipse cx="688.1" cy="181.3" rx="1.9" ry="1.6" fill="#f3f3f3" stroke="#8f8f8f" stroke-width="0.5"/>
<ellipse cx="622.1" cy="187.3" rx="1.4" ry="1.1" fill="#f3f3f3" stroke="#8f8f8f" stroke-width="0.5"/>
<ellipse cx="633.1" cy="180.8" rx="1.9" ry="1.5" fill="#f3f3f3" stroke="#8f8f8f" stroke-width="0.5"/>
<ellipse cx="771.5" cy="187.0" rx="1.7" ry="1.4" fill="#f3f3f3" stroke="#8f8f8f" stroke-width="0.5"/>
<ellipse cx="621.7" cy="184.0" rx="1.8" ry="1.4" fill="#f3f3f3" stroke="#8f8f8f" stroke-width="0.5"/>
<ellipse cx="672.5" cy="183.2" rx="1.4" ry="1.1" fill="#f3f3f3" stroke="#8f8f8f" stroke-width="0.5"/>
<ellipse cx="604.7" cy="181.2" rx="1.7" ry="1.4" fill="#f3f3f3" stroke="#8f8f8f" stroke-width="0.5"/>
<ellipse cx="697.4" cy="186.0" rx="1.1" ry="0.9" fill="#f3f3f3" stroke="#8f8f8f" stroke-width="0.5"/>
<ellipse cx="632.0" cy="181.7" rx="1.3" ry="1.0" fill="#f3f3f3" stroke="#8f8f8f" stroke-width="0.5"/>
<ellipse cx="654.3" cy="181.3" rx="1.0" ry="0.8" fill="#f3f3f3" stroke="#8f8f8f" stroke-width="0.5"/>
<ellipse cx="721.0" cy="185.4" rx="1.9" ry="1.5" fill="#f3f3f3" stroke="#8f8f8f" stroke-width="0.5"/>
<ellipse cx="770.2" cy="184.8" rx="1.9" ry="1.5" fill="#f3f3f3" stroke="#8f8f8f" stroke-width="0.5"/>
<ellipse cx="755.1" cy="181.7" rx="1.0" ry="0.8" fill="#f3f3f3" stroke="#8f8f8f" stroke-width="0.5"/>
<ellipse cx="748.1" cy="180.9" rx="1.2" ry="0.9" fill="#f3f3f3" stroke="#8f8f8f" stroke-width="0.5"/>
<ellipse cx="612.3" cy="183.0" rx="1.9" ry="1.5" fill="#f3f3f3" stroke="#8f8f8f" stroke-width="0.5"/>
<ellipse cx="644.6" cy="187.5" rx="1.5" ry="1.2" fill="#f3f3f3" stroke="#8f8f8f" stroke-width="0.5"/>
<ellipse cx="748.4" cy="186.3" rx="1.9" ry="1.5" fill="#f3f3f3" stroke="#8f8f8f" stroke-width="0.5"/>
<ellipse cx="750.3" cy="182.7" rx="1.5" ry="1.2" fill="#f3f3f3" stroke="#8f8f8f" stroke-width="0.5"/>
<ellipse cx="721.3" cy="187.5" rx="0.9" ry="0.7" fill="#f3f3f3" stroke="#8f8f8f" stroke-width="0.5"/>
<ellipse cx="703.4" cy="182.4" rx="1.3" ry="1.1" fill="#f3f3f3" stroke="#8f8f8f" stroke-width="0.5"/>
<ellipse cx="616.8" cy="181.2" rx="0.9" ry="0.7" fill="#f3f3f3" stroke="#8f8f8f" stroke-width="0.5"/>
<ellipse cx="716.0" cy="181.4" rx="1.5" ry="1.2" fill="#f3f3f3" stroke="#8f8f8f" stroke-width="0.5"/>
<ellipse cx="629.4" cy="181.8" rx="1.3" ry="1.1" fill="#f3f3f3" stroke="#8f8f8f" stroke-width="0.5"/>
<ellipse cx="725.8" cy="186.9" rx="1.8" ry="1.4" fill="#f3f3f3" stroke="#8f8f8f" stroke-width="0.5"/>
<ellipse cx="611.2" cy="186.1" rx="1.1" ry="0.9" fill="#f3f3f3" stroke="#8f8f8f" stroke-width="0.5"/>
<ellipse cx="655.5" cy="180.8" rx="1.3" ry="1.1" fill="#f3f3f3" stroke="#8f8f8f" stroke-width="0.5"/>
<ellipse cx="689.1" cy="184.5" rx="1.9" ry="1.6" fill="#f3f3f3" stroke="#8f8f8f" stroke-width="0.5"/>
<ellipse cx="730.0" cy="187.6" rx="1.2" ry="1.0" fill="#f3f3f3" stroke="#8f8f8f" stroke-width="0.5"/>
<ellipse cx="611.3" cy="186.4" rx="2.0" ry="1.6" fill="#f3f3f3" stroke="#8f8f8f" stroke-width="0.5"/>
<ellipse cx="619.0" cy="181.1" rx="1.0" ry="0.8" fill="#f3f3f3" stroke="#8f8f8f" stroke-width="0.5"/>
<ellipse cx="710.0" cy="180.6" rx="1.6" ry="1.3" fill="#f3f3f3" stroke="#8f8f8f" stroke-width="0.5"/>
<ellipse cx="671.1" cy="182.1" rx="1.0" ry="0.8" fill="#f3f3f3" stroke="#8f8f8f" stroke-width="0.5"/>
<ellipse cx="744.7" cy="185.8" rx="1.4" ry="1.1" fill="#f3f3f3" stroke="#8f8f8f" stroke-width="0.5"/>
<ellipse cx="711.8" cy="187.5" rx="1.0" ry="0.8" fill="#f3f3f3" stroke="#8f8f8f" stroke-width="0.5"/>
<ellipse cx="757.6" cy="186.2" rx="1.6" ry="1.3" fill="#f3f3f3" stroke="#8f8f8f" stroke-width="0.5"/>
<ellipse cx="723.7" cy="185.5" rx="1.2" ry="0.9" fill="#f3f3f3" stroke="#8f8f8f" stroke-width="0.5"/>
<ellipse cx="746.0" cy="187.5" rx="2.0" ry="1.6" fill="#f3f3f3" stroke="#8f8f8f" stroke-width="0.5"/>
<ellipse cx="669.2" cy="181.6" rx="1.5" ry="1.2" fill="#f3f3f3" stroke="#8f8f8f" stroke-width="0.5"/>
<ellipse cx="731.4" cy="183.9" rx="1.0" ry="0.8" fill="#f3f3f3" stroke="#8f8f8f" stroke-width="0.5"/>
<ellipse cx="659.3" cy="185.2" rx="1.6" ry="1.3" fill="#f3f3f3" stroke="#8f8f8f" stroke-width="0.5"/>
<ellipse cx="645.0" cy="186.7" rx="1.1" ry="0.9" fill="#f3f3f3" stroke="#8f8f8f" stroke-width="0.5"/>
<ellipse cx="649.1" cy="183.3" rx="1.9" ry="1.5" fill="#f3f3f3" stroke="#8f8f8f" stroke-width="0.5"/>
<ellipse cx="649.7" cy="181.8" rx="1.3" ry="1.1" fill="#f3f3f3" stroke="#8f8f8f" stroke-width="0.5"/>
<ellipse cx="606.1" cy="186.4" rx="1.9" ry="1.5" fill="#f3f3f3" stroke="#8f8f8f" stroke-width="0.5"/>
<circle cx="697.8" cy="184.7" r="1.3" fill="#f2f2f2" stroke="#999" stroke-width="0.3"/>
<circle cx="772.9" cy="185.5" r="1.0" fill="#f2f2f2" stroke="#999" stroke-width="0.3"/>
<circle cx="752.2" cy="183.9" r="1.3" fill="#f2f2f2" stroke="#999" stroke-width="0.3"/>
<circle cx="728.6" cy="180.0" r="1.4" fill="#f2f2f2" stroke="#999" stroke-width="0.3"/>
<circle cx="717.2" cy="183.9" r="1.2" fill="#f2f2f2" stroke="#999" stroke-width="0.3"/>
<circle cx="681.5" cy="181.5" r="1.2" fill="#f2f2f2" stroke="#999" stroke-width="0.3"/>
<circle cx="606.6" cy="184.0" r="1.3" fill="#f2f2f2" stroke="#999" stroke-width="0.3"/>
<circle cx="678.6" cy="184.5" r="1.6" fill="#f2f2f2" stroke="#999" stroke-width="0.3"/>
<circle cx="757.9" cy="181.1" r="1.4" fill="#f2f2f2" stroke="#999" stroke-width="0.3"/>
<circle cx="710.3" cy="180.4" r="1.1" fill="#f2f2f2" stroke="#999" stroke-width="0.3"/>
<circle cx="641.3" cy="180.6" r="1.2" fill="#f2f2f2" stroke="#999" stroke-width="0.3"/>
<circle cx="764.6" cy="182.6" r="1.5" fill="#f2f2f2" stroke="#999" stroke-width="0.3"/>
<circle cx="723.0" cy="181.1" r="1.5" fill="#f2f2f2" stroke="#999" stroke-width="0.3"/>
<circle cx="706.4" cy="187.4" r="1.4" fill="#f2f2f2" stroke="#999" stroke-width="0.3"/>
<circle cx="730.9" cy="182.7" r="1.4" fill="#f2f2f2" stroke="#999" stroke-width="0.3"/>
<circle cx="764.9" cy="186.9" r="1.1" fill="#f2f2f2" stroke="#999" stroke-width="0.3"/>
<circle cx="734.0" cy="183.9" r="0.9" fill="#f2f2f2" stroke="#999" stroke-width="0.3"/>
<circle cx="607.6" cy="180.6" r="1.0" fill="#f2f2f2" stroke="#999" stroke-width="0.3"/>
<circle cx="628.5" cy="184.0" r="1.4" fill="#f2f2f2" stroke="#999" stroke-width="0.3"/>
<circle cx="695.1" cy="183.4" r="1.3" fill="#f2f2f2" stroke="#999" stroke-width="0.3"/>
<circle cx="653.9" cy="183.7" r="1.4" fill="#f2f2f2" stroke="#999" stroke-width="0.3"/>
<circle cx="671.1" cy="181.4" r="1.5" fill="#f2f2f2" stroke="#999" stroke-width="0.3"/>
<circle cx="727.4" cy="182.9" r="1.1" fill="#f2f2f2" stroke="#999" stroke-width="0.3"/>
<circle cx="693.7" cy="184.8" r="1.0" fill="#f2f2f2" stroke="#999" stroke-width="0.3"/>
<circle cx="600.5" cy="181.7" r="1.4" fill="#f2f2f2" stroke="#999" stroke-width="0.3"/>
<circle cx="625.4" cy="183.7" r="1.0" fill="#f2f2f2" stroke="#999" stroke-width="0.3"/>
<circle cx="637.0" cy="181.4" r="1.1" fill="#f2f2f2" stroke="#999" stroke-width="0.3"/>
<circle cx="629.8" cy="180.2" r="0.9" fill="#f2f2f2" stroke="#999" stroke-width="0.3"/>
<circle cx="629.8" cy="183.9" r="0.8" fill="#f2f2f2" stroke="#999" stroke-width="0.3"/>
<circle cx="604.0" cy="183.6" r="1.1" fill="#f2f2f2" stroke="#999" stroke-width="0.3"/>
<circle cx="724.5" cy="180.4" r="1.1" fill="#f2f2f2" stroke="#999" stroke-width="0.3"/>
<circle cx="670.2" cy="180.2" r="1.6" fill="#f2f2f2" stroke="#999" stroke-width="0.3"/>
<circle cx="638.7" cy="180.8" r="1.2" fill="#f2f2f2" stroke="#999" stroke-width="0.3"/>
<circle cx="629.2" cy="185.0" r="1.1" fill="#f2f2f2" stroke="#999" stroke-width="0.3"/>
<circle cx="621.9" cy="180.4" r="1.4" fill="#f2f2f2" stroke="#999" stroke-width="0.3"/>
<circle cx="648.7" cy="186.3" r="1.2" fill="#f2f2f2" stroke="#999" stroke-width="0.3"/>
<circle cx="765.1" cy="182.4" r="1.0" fill="#f2f2f2" stroke="#999" stroke-width="0.3"/>
<circle cx="647.0" cy="186.5" r="1.3" fill="#f2f2f2" stroke="#999" stroke-width="0.3"/>
<circle cx="661.0" cy="180.7" r="1.3" fill="#f2f2f2" stroke="#999" stroke-width="0.3"/>
<circle cx="771.6" cy="184.7" r="0.8" fill="#f2f2f2" stroke="#999" stroke-width="0.3"/>
<circle cx="605.4" cy="180.7" r="0.9" fill="#f2f2f2" stroke="#999" stroke-width="0.3"/>
<circle cx="606.5" cy="180.4" r="1.3" fill="#f2f2f2" stroke="#999" stroke-width="0.3"/>
<circle cx="759.4" cy="181.6" r="1.6" fill="#f2f2f2" stroke="#999" stroke-width="0.3"/>
<circle cx="684.4" cy="186.4" r="1.5" fill="#f2f2f2" stroke="#999" stroke-width="0.3"/>
<circle cx="766.4" cy="180.3" r="1.0" fill="#f2f2f2" stroke="#999" stroke-width="0.3"/>
<circle cx="707.4" cy="187.6" r="0.9" fill="#f2f2f2" stroke="#999" stroke-width="0.3"/>
<circle cx="651.9" cy="186.8" r="0.9" fill="#f2f2f2" stroke="#999" stroke-width="0.3"/>
<circle cx="669.0" cy="182.7" r="1.3" fill="#f2f2f2" stroke="#999" stroke-width="0.3"/>
<circle cx="764.3" cy="181.4" r="1.4" fill="#f2f2f2" stroke="#999" stroke-width="0.3"/>
<circle cx="729.9" cy="186.7" r="1.2" fill="#f2f2f2" stroke="#999" stroke-width="0.3"/>
<circle cx="763.5" cy="182.9" r="1.1" fill="#f2f2f2" stroke="#999" stroke-width="0.3"/>
<circle cx="640.6" cy="186.2" r="1.2" fill="#f2f2f2" stroke="#999" stroke-width="0.3"/>
<circle cx="647.7" cy="181.4" r="1.4" fill="#f2f2f2" stroke="#999" stroke-width="0.3"/>
<circle cx="707.2" cy="185.7" r="1.1" fill="#f2f2f2" stroke="#999" stroke-width="0.3"/>
<circle cx="686.2" cy="181.2" r="1.4" fill="#f2f2f2" stroke="#999" stroke-width="0.3"/>
<circle cx="680.1" cy="184.7" r="1.4" fill="#f4f4f4" stroke="#8a8a8a" stroke-width="0.35"/>
<circle cx="682.4" cy="184.3" r="1.2" fill="#f4f4f4" stroke="#8a8a8a" stroke-width="0.35"/>
<circle cx="632.7" cy="184.3" r="1.2" fill="#f4f4f4" stroke="#8a8a8a" stroke-width="0.35"/>
<circle cx="740.4" cy="181.2" r="0.9" fill="#f4f4f4" stroke="#8a8a8a" stroke-width="0.35"/>
<circle cx="616.0" cy="186.6" r="1.3" fill="#f4f4f4" stroke="#8a8a8a" stroke-width="0.35"/>
<circle cx="607.4" cy="187.9" r="1.5" fill="#f4f4f4" stroke="#8a8a8a" stroke-width="0.35"/>
<circle cx="715.7" cy="185.1" r="0.8" fill="#f4f4f4" stroke="#8a8a8a" stroke-width="0.35"/>
<circle cx="602.7" cy="184.5" r="0.7" fill="#f4f4f4" stroke="#8a8a8a" stroke-width="0.35"/>
<circle cx="633.7" cy="182.3" r="0.7" fill="#f4f4f4" stroke="#8a8a8a" stroke-width="0.35"/>
<circle cx="682.1" cy="183.8" r="1.4" fill="#f4f4f4" stroke="#8a8a8a" stroke-width="0.35"/>
<circle cx="691.9" cy="185.3" r="1.1" fill="#f4f4f4" stroke="#8a8a8a" stroke-width="0.35"/>
<circle cx="717.3" cy="183.9" r="0.9" fill="#f4f4f4" stroke="#8a8a8a" stroke-width="0.35"/>
<circle cx="776.6" cy="188.0" r="1.4" fill="#f4f4f4" stroke="#8a8a8a" stroke-width="0.35"/>
<circle cx="725.3" cy="182.9" r="0.9" fill="#f4f4f4" stroke="#8a8a8a" stroke-width="0.35"/>
<circle cx="651.2" cy="181.0" r="1.3" fill="#f4f4f4" stroke="#8a8a8a" stroke-width="0.35"/>
<circle cx="670.9" cy="186.8" r="1.0" fill="#f4f4f4" stroke="#8a8a8a" stroke-width="0.35"/>
<circle cx="769.6" cy="186.9" r="0.7" fill="#f4f4f4" stroke="#8a8a8a" stroke-width="0.35"/>
<circle cx="637.1" cy="187.3" r="1.1" fill="#f4f4f4" stroke="#8a8a8a" stroke-width="0.35"/>
<circle cx="773.5" cy="183.5" r="0.8" fill="#f4f4f4" stroke="#8a8a8a" stroke-width="0.35"/>
<circle cx="711.4" cy="186.3" r="0.9" fill="#f4f4f4" stroke="#8a8a8a" stroke-width="0.35"/>
<circle cx="615.4" cy="183.0" r="1.5" fill="#f4f4f4" stroke="#8a8a8a" stroke-width="0.35"/>
<circle cx="734.2" cy="181.4" r="0.9" fill="#f4f4f4" stroke="#8a8a8a" stroke-width="0.35"/>
<circle cx="617.9" cy="180.9" r="1.3" fill="#f4f4f4" stroke="#8a8a8a" stroke-width="0.35"/>
<circle cx="631.4" cy="184.7" r="1.1" fill="#f4f4f4" stroke="#8a8a8a" stroke-width="0.35"/>
<circle cx="633.8" cy="186.0" r="0.8" fill="#f4f4f4" stroke="#8a8a8a" stroke-width="0.35"/>
<circle cx="713.9" cy="181.4" r="1.0" fill="#f4f4f4" stroke="#8a8a8a" stroke-width="0.35"/>
<circle cx="637.7" cy="182.5" r="1.5" fill="#f4f4f4" stroke="#8a8a8a" stroke-width="0.35"/>
<circle cx="742.2" cy="182.8" r="1.4" fill="#f4f4f4" stroke="#8a8a8a" stroke-width="0.35"/>
<circle cx="637.3" cy="183.5" r="1.4" fill="#f4f4f4" stroke="#8a8a8a" stroke-width="0.35"/>
<circle cx="713.6" cy="181.3" r="1.5" fill="#f4f4f4" stroke="#8a8a8a" stroke-width="0.35"/>
<circle cx="637.7" cy="182.4" r="1.3" fill="#f4f4f4" stroke="#8a8a8a" stroke-width="0.35"/>
<circle cx="658.2" cy="182.7" r="0.8" fill="#f4f4f4" stroke="#8a8a8a" stroke-width="0.35"/>
<circle cx="616.0" cy="184.9" r="0.9" fill="#f4f4f4" stroke="#8a8a8a" stroke-width="0.35"/>
<circle cx="706.4" cy="183.3" r="1.1" fill="#f4f4f4" stroke="#8a8a8a" stroke-width="0.35"/>
<circle cx="769.8" cy="184.1" r="1.2" fill="#f4f4f4" stroke="#8a8a8a" stroke-width="0.35"/>
<circle cx="753.4" cy="181.9" r="0.8" fill="#f4f4f4" stroke="#8a8a8a" stroke-width="0.35"/>
<circle cx="760.8" cy="186.6" r="0.9" fill="#f4f4f4" stroke="#8a8a8a" stroke-width="0.35"/>
<circle cx="633.6" cy="186.0" r="1.5" fill="#f4f4f4" stroke="#8a8a8a" stroke-width="0.35"/>
<circle cx="634.8" cy="187.6" r="1.4" fill="#f4f4f4" stroke="#8a8a8a" stroke-width="0.35"/>
<circle cx="706.8" cy="183.7" r="0.8" fill="#f4f4f4" stroke="#8a8a8a" stroke-width="0.35"/>
<circle cx="606.8" cy="187.7" r="0.9" fill="#f4f4f4" stroke="#8a8a8a" stroke-width="0.35"/>
<circle cx="724.7" cy="182.4" r="1.4" fill="#f4f4f4" stroke="#8a8a8a" stroke-width="0.35"/>
<circle cx="705.6" cy="182.7" r="0.8" fill="#f4f4f4" stroke="#8a8a8a" stroke-width="0.35"/>
<circle cx="727.5" cy="181.0" r="0.9" fill="#f4f4f4" stroke="#8a8a8a" stroke-width="0.35"/>
<circle cx="699.0" cy="186.9" r="1.2" fill="#f4f4f4" stroke="#8a8a8a" stroke-width="0.35"/>
<circle cx="649.6" cy="187.4" r="0.9" fill="#f4f4f4" stroke="#8a8a8a" stroke-width="0.35"/>
<circle cx="602.9" cy="182.5" r="1.1" fill="#f4f4f4" stroke="#8a8a8a" stroke-width="0.35"/>
<circle cx="610.7" cy="181.8" r="1.0" fill="#f4f4f4" stroke="#8a8a8a" stroke-width="0.35"/>
<circle cx="701.3" cy="181.5" r="1.0" fill="#f4f4f4" stroke="#8a8a8a" stroke-width="0.35"/>
<circle cx="757.7" cy="187.9" r="1.2" fill="#f4f4f4" stroke="#8a8a8a" stroke-width="0.35"/>
<circle cx="722.3" cy="184.9" r="0.8" fill="#f4f4f4" stroke="#8a8a8a" stroke-width="0.35"/>
<circle cx="606.2" cy="180.6" r="1.4" fill="#f4f4f4" stroke="#8a8a8a" stroke-width="0.35"/>
<circle cx="724.1" cy="187.7" r="0.7" fill="#f4f4f4" stroke="#8a8a8a" stroke-width="0.35"/>
<circle cx="712.6" cy="184.1" r="1.3" fill="#f4f4f4" stroke="#8a8a8a" stroke-width="0.35"/>
<circle cx="656.4" cy="188.0" r="0.8" fill="#f4f4f4" stroke="#8a8a8a" stroke-width="0.35"/>
<circle cx="696.7" cy="186.0" r="1.4" fill="#f4f4f4" stroke="#8a8a8a" stroke-width="0.35"/>
<circle cx="730.5" cy="185.8" r="1.3" fill="#f4f4f4" stroke="#8a8a8a" stroke-width="0.35"/>
<circle cx="762.0" cy="183.1" r="1.2" fill="#f4f4f4" stroke="#8a8a8a" stroke-width="0.35"/>
<circle cx="759.4" cy="187.0" r="1.0" fill="#f4f4f4" stroke="#8a8a8a" stroke-width="0.35"/>
<circle cx="739.9" cy="187.0" r="1.2" fill="#f4f4f4" stroke="#8a8a8a" stroke-width="0.35"/>
<circle cx="710.6" cy="183.4" r="1.2" fill="#f4f4f4" stroke="#8a8a8a" stroke-width="0.35"/>
<circle cx="707.8" cy="181.1" r="1.2" fill="#f4f4f4" stroke="#8a8a8a" stroke-width="0.35"/>
<circle cx="775.8" cy="187.1" r="1.3" fill="#f4f4f4" stroke="#8a8a8a" stroke-width="0.35"/>
<circle cx="668.8" cy="186.0" r="1.2" fill="#f4f4f4" stroke="#8a8a8a" stroke-width="0.35"/>
<circle cx="678.0" cy="186.8" r="0.8" fill="#f4f4f4" stroke="#8a8a8a" stroke-width="0.35"/>
<circle cx="732.8" cy="180.7" r="1.2" fill="#f4f4f4" stroke="#8a8a8a" stroke-width="0.35"/>
<circle cx="685.1" cy="182.2" r="1.3" fill="#f4f4f4" stroke="#8a8a8a" stroke-width="0.35"/>
<circle cx="688.0" cy="185.1" r="1.4" fill="#f4f4f4" stroke="#8a8a8a" stroke-width="0.35"/>
<circle cx="645.3" cy="180.6" r="0.9" fill="#f4f4f4" stroke="#8a8a8a" stroke-width="0.35"/>
<circle cx="720.0" cy="182.0" r="0.8" fill="#f4f4f4" stroke="#8a8a8a" stroke-width="0.35"/>
</g>
<path d="M607.3 125.4H777" stroke="#555" stroke-width="1.2" stroke-dasharray="9.5 6.8"/>
<g stroke="#8c8c8c" stroke-width="1">
<path d="M569.3 79V178.6"/>
<path d="M565.2 79H572.8"/>
<path d="M565.2 93.3H572.8"/>
<path d="M565.2 107.5H572.8"/>
<path d="M565.2 125.3H572.8"/>
<path d="M565.2 178.6H572.8"/>
</g>
<g font-family="Liberation Sans" font-size="10.5" fill="#8a8a8a">
<text x="573" y="90.5">80</text><text x="573" y="104.5">80</text><text x="573" y="120.5">100</text><text x="573" y="157">300</text>
<text transform="translate(563.5,128.8) rotate(-90)" text-anchor="middle">560,2</text>
</g>
<text x="671.6" y="72.8" font-family="Liberation Sans" font-size="10.5" fill="#888">Binnen</text>
<text x="777" y="72.8" font-family="Liberation Sans" font-size="10.5" fill="#c2c2c2" text-anchor="end">ubakus.de</text>
<circle cx="703" cy="86.7" r="7.4" fill="#fff" stroke="#2a2a2a" stroke-width="1.2"/>
<text x="703" y="90.3" font-family="Liberation Sans" font-size="10.5" fill="#1a1a1a" text-anchor="middle">1</text>
<circle cx="688.2" cy="100.7" r="7.4" fill="#fff" stroke="#2a2a2a" stroke-width="1.2"/>
<text x="688.2" y="104.3" font-family="Liberation Sans" font-size="10.5" fill="#1a1a1a" text-anchor="middle">2</text>
<circle cx="688.2" cy="116.7" r="7.4" fill="#fff" stroke="#2a2a2a" stroke-width="1.2"/>
<text x="688.2" y="120.3" font-family="Liberation Sans" font-size="10.5" fill="#1a1a1a" text-anchor="middle">3</text>
<circle cx="673" cy="125.4" r="7.4" fill="#fff" stroke="#2a2a2a" stroke-width="1.2"/>
<text x="673" y="129.0" font-family="Liberation Sans" font-size="10.5" fill="#1a1a1a" text-anchor="middle">4</text>
<circle cx="672.5" cy="152.4" r="7.4" fill="#fff" stroke="#2a2a2a" stroke-width="1.2"/>
<text x="672.5" y="156.0" font-family="Liberation Sans" font-size="10.5" fill="#1a1a1a" text-anchor="middle">5</text>
</svg>
<div id="bot" class="a"></div>
<!-- col1 -->
<svg class="a" style="left:47px;top:351px" width="11" height="9" viewBox="0 0 11 9"><path d="M0.8 1H10.2L5.5 8.5Z" fill="#eee"/></svg>
<div class="a" style="left:62px;top:351px;color:#f0f0f0;font-size:14px;line-height:16px">R</div>
<div class="a" style="left:72px;top:358.5px;color:#f0f0f0;font-size:9px;line-height:10px">C</div>
<div class="a" style="left:82.3px;top:351px;color:#f0f0f0;font-size:13px;line-height:16px;transform:scaleY(1.1)">=</div>
<div class="a" style="left:95.3px;top:346px;color:#f0f0f0;font-size:19.6px;line-height:20px">2,304</div>
<div class="a" style="left:147.5px;top:354px;color:#f0f0f0;font-size:10.6px;line-height:12px">m²K/W</div>
<svg class="a" style="left:224px;top:352px" width="14" height="14" viewBox="0 0 14 14"><path d="M1.5 3.8L3.8 1.5L4.2 1.2C5.5 0.7 7.2 1.2 7.8 2.8C8.2 3.8 8 4.8 7.6 5.5L12.8 10.7C13.3 11.2 13.3 11.9 12.8 12.4L12.4 12.8C11.9 13.3 11.2 13.3 10.7 12.8L5.5 7.6C4.8 8 3.8 8.2 2.8 7.8C1.2 7.2 0.7 5.5 1.2 4.2L3.3 6.3L5.2 5.2L6.3 3.3L4.2 1.2" fill="#c4c4c4"/></svg>
<div class="bar" style="left:62px;top:373.5px;width:177px;height:9px;background:#4b4b4b"></div>
<div class="a" style="left:62px;top:374.5px;width:72px;height:7.5px;background:#b3241c"></div>
<div class="strip" style="left:62px;top:383.6px;width:177px;background:linear-gradient(90deg,#7b9f4a 0,#7b9f4a 49px,#b3301f 49px)"></div>
<div class="wt" style="left:62px;top:390px">Bouwbesluit 2015 Rc&gt;3.5</div>
<div class="a" style="left:179px;top:389px;width:11.2px;height:11px;background:#cacaca"><span style="position:absolute;left:2.1px;top:2.8px;width:0;height:0;border-left:3.5px solid transparent;border-right:3.5px solid transparent;border-top:6px solid #2a2a2a"></span></div>
<div class="wt" style="left:62px;top:410px">Bijdrage aan het broeikaseffect:</div>
<div class="bar" style="left:62px;top:423px;width:177px;height:7px;background:#c0281e;border-color:#777"></div>
<div class="strip" style="left:62px;top:430px;width:177px;background:linear-gradient(90deg,#7b9f4a 0%,#7b9f4a 70%,#b9a23c 76%,#b9a23c 88%,#bf7a2e 92%,#b3301f 97%,#b3301f 100%)"></div>
<div class="gt" style="left:62px;top:437px">zeer goed</div>
<div class="gt" style="left:62px;top:437px;width:177px;text-align:right">slecht</div>

<!-- col2 -->
<div class="wt" style="left:247px;top:350px">Condenswater: 0 kg/m²</div>
<div class="bar" style="left:247px;top:362.5px;width:177px"></div>
<div class="a" style="left:247.4px;top:363px;width:2px;height:5.5px;background:#a3d65c"></div>
<div class="strip" style="left:247px;top:369px;width:177px;background:linear-gradient(90deg,#7b9f4a 0%,#7b9f4a 57%,#b9a23c 62%,#b9a23c 80%,#bf7a2e 85%,#b3301f 92%,#b3301f 100%)"></div>
<div class="wt" style="left:247px;top:381px">Houtvochtgehalte: +0,0 %</div>
<div class="bar" style="left:247px;top:393px;width:177px"></div>
<div class="a" style="left:247.4px;top:394px;width:1.8px;height:4px;background:#a3d65c"></div>
<div class="strip" style="left:247px;top:399.3px;width:177px;background:linear-gradient(90deg,#7b9f4a 0%,#7b9f4a 25%,#b9a23c 30%,#b9a23c 40%,#bf7a2e 44%,#b3301f 48%,#b3301f 100%)"></div>
<div class="wt" style="left:247px;top:411px">Droogtijd: -</div>
<div class="bar" style="left:247px;top:423.5px;width:177px"></div>
<div class="a" style="left:247.4px;top:424.5px;width:1.8px;height:4px;background:#a3d65c"></div>
<div class="strip" style="left:247px;top:429.8px;width:177px;background:linear-gradient(90deg,#7b9f4a 0%,#7b9f4a 38%,#b9a23c 43%,#b9a23c 75%,#bf7a2e 80%,#b3301f 87%,#b3301f 100%)"></div>
<div class="gt" style="left:247px;top:437px">zeer goed</div>
<div class="gt" style="left:247px;top:437px;width:177px;text-align:right">slecht</div>

<!-- col3 -->
<div class="wt" style="left:432px;top:350px">µd-waarde: 32 m</div>
<div class="wt" style="left:432px;top:350px;width:176px;text-align:right">Dikte: 56,02 cm</div>
<div class="wt" style="left:432px;top:363.5px;width:176px;text-align:right">Gewicht: 853 kg/m²</div>
<div class="wt" style="left:432px;top:378.5px">Oppervlakte binnen: 20,0°C (50%)</div>
<div class="bar" style="left:432px;top:392px;width:176px"></div>
<div class="a" style="left:432px;top:392px;width:88px;height:4.8px;background:#8cc152"></div>
<div class="strip" style="left:432px;top:398px;width:176px;background:linear-gradient(90deg,#b3301f 0%,#b3301f 14%,#bf7a2e 18%,#b9a23c 22%,#b9a23c 32%,#7b9f4a 38%,#7b9f4a 100%)"></div>
<div class="wt" style="left:432px;top:408.5px">Droogreserve: 110 g//m²a</div>
<div class="bar" style="left:432px;top:422px;width:176px"></div>
<div class="gt" style="left:432px;top:437px">slecht</div>
<div class="gt" style="left:432px;top:437px;width:176px;text-align:right">zeer goed</div>

<!-- col4 -->
<div class="wt" style="left:616px;top:350px">Temp. ampl. demping (1/TAV): -</div>
<div class="bar" style="left:616px;top:362.5px;width:177px"></div>
<div class="wt" style="left:616px;top:381px">Faseverschuiving: -</div>
<div class="bar" style="left:616px;top:393px;width:177px"></div>
<div class="wt" style="left:616px;top:411px">Interne opslagcapaciteit: 225 kJ/m²K</div>
<div class="bar" style="left:616px;top:423.5px;width:177px"></div>
<div class="a" style="left:616px;top:424px;width:176px;height:5px;background:#8cc152"></div>
<div class="strip" style="left:616px;top:429.5px;width:177px;background:linear-gradient(90deg,#b3301f 0%,#b3301f 8%,#bf7a2e 13%,#b9a23c 18%,#b9a23c 36%,#7b9f4a 44%,#7b9f4a 100%)"></div>
<div class="gt" style="left:616px;top:437px">slecht</div>
<div class="gt" style="left:616px;top:437px;width:177px;text-align:right">zeer goed</div>
</body></html>
